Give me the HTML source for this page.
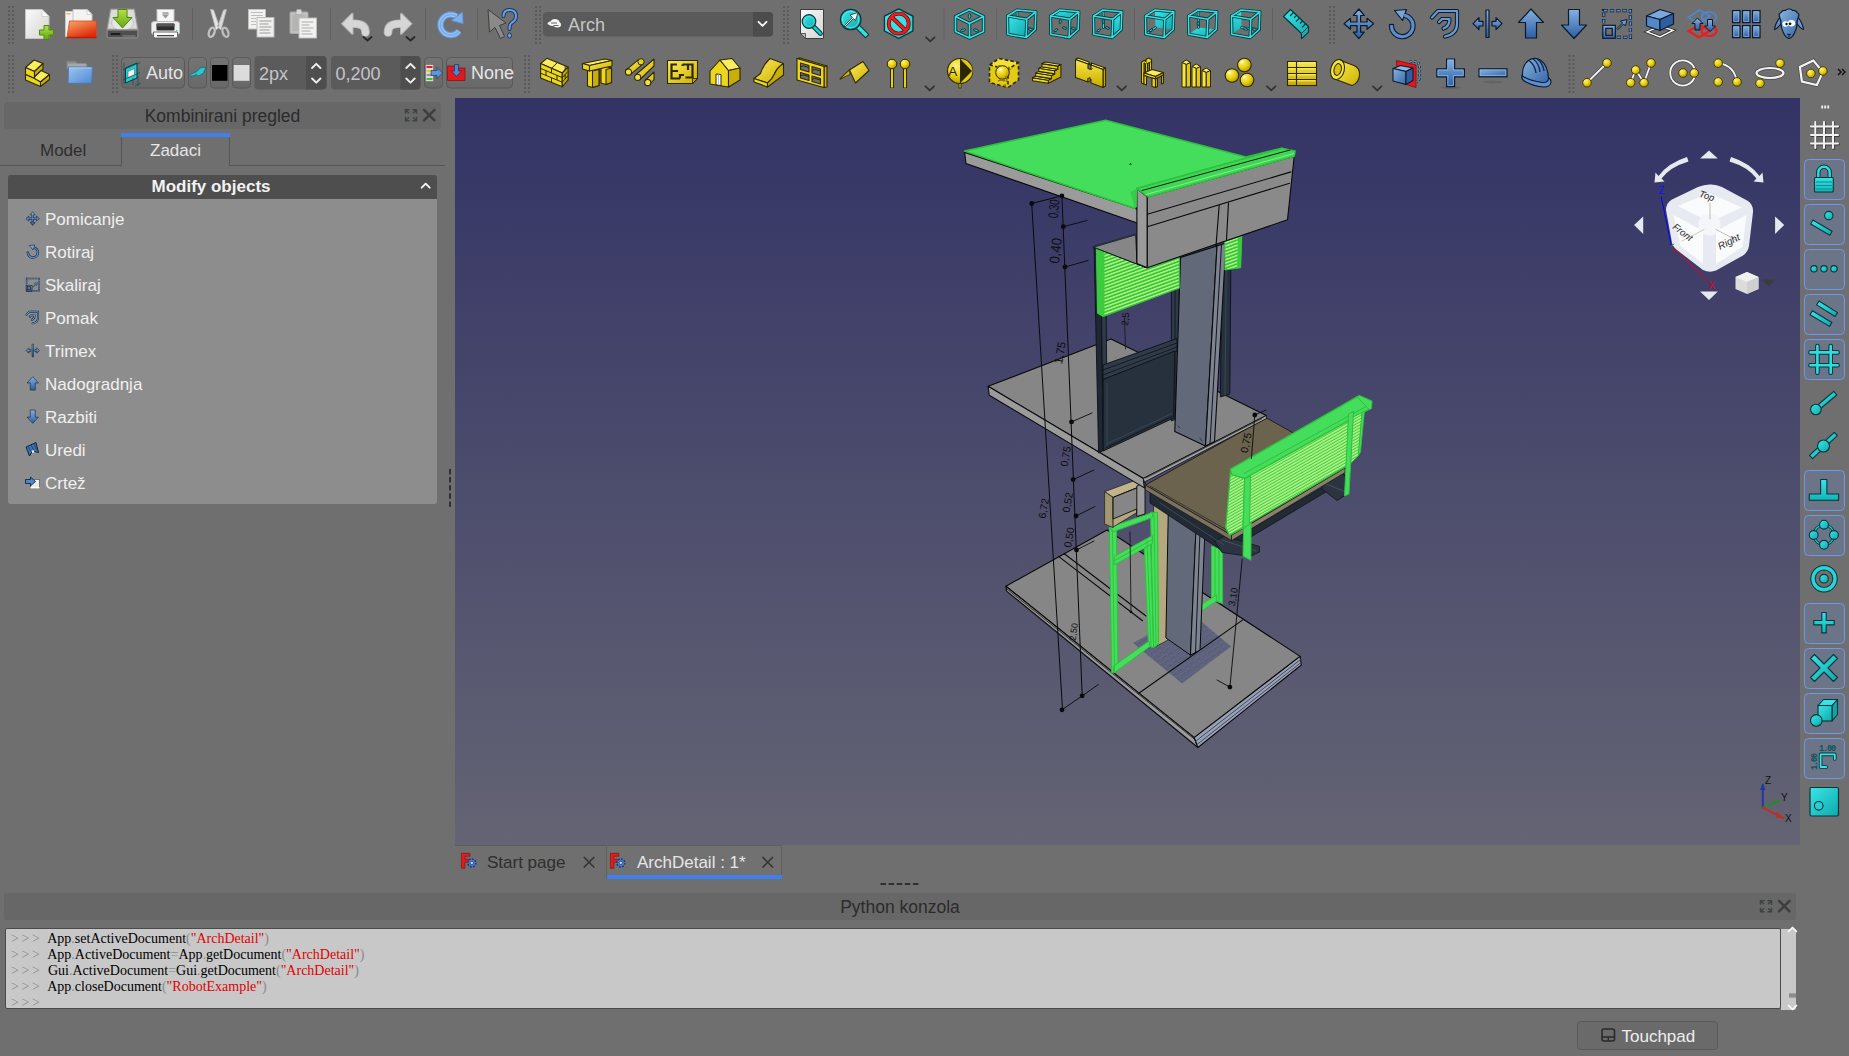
<!DOCTYPE html>
<html><head><meta charset="utf-8"><title>FreeCAD</title>
<style>
*{box-sizing:border-box;margin:0;padding:0}
html,body{width:1849px;height:1056px;overflow:hidden;background:#6f6f6f;font-family:"Liberation Sans",sans-serif;color:#e2e2e2}
.a{position:absolute}
#view{left:455px;top:98px;width:1345px;height:747px;background:linear-gradient(#333366,#646474)}
.tb{background:#676767;border-radius:3px;color:#2b2b2b;font-size:17.5px;text-align:center}
.hd{left:8px;top:175px;width:429px;height:24px;background:#4e4e4e;border-radius:3px 3px 0 0;color:#f2f2f2;font-weight:bold;font-size:17px;text-align:center;line-height:24px;padding-right:23px}
.li{left:8px;top:199px;width:429px;height:305px;background:#8d8d8d;border-radius:0 0 3px 3px}
.it{left:45px;font-size:17px;color:#f0f0f0;height:20px;line-height:20px}
#con{left:5px;top:928px;width:1776px;height:81px;background:#c8c8c8;border:1px solid #4a4a4a;border-radius:2px;font-family:"Liberation Serif",serif;font-size:14px;color:#000;line-height:16px;padding:2px 0 0 5px;white-space:pre}
#con i{font-style:normal;color:#8a8a8a}
#con u{text-decoration:none;color:#8a8a8a;letter-spacing:2.6px;margin-right:2px}
#con b{font-weight:normal;color:#e00000}
svg{position:absolute;left:0;top:0;overflow:visible}
</style></head>
<body>
<!-- 3D view -->
<div id="view" class="a"></div>
<svg width="1849" height="1056" viewBox="0 0 1849 1056"><defs>
<pattern id="lv" width="6" height="3.2" patternUnits="userSpaceOnUse" patternTransform="rotate(-20)"><rect width="6" height="3.2" fill="#34c838"/><rect y="0" width="6" height="1.45" fill="#b8f288"/></pattern>
<pattern id="lv2" width="6" height="2.6" patternUnits="userSpaceOnUse" patternTransform="rotate(-29.5)"><rect width="6" height="2.6" fill="#3ccf40"/><rect y="0" width="6" height="1.4" fill="#c4f792"/></pattern>
<pattern id="tile" width="7" height="5" patternUnits="userSpaceOnUse" patternTransform="rotate(-32)"><rect width="7" height="5" fill="#5a5e78"/><path d="M0,0 h7 M0,2.5 h7 M2,0 v2.5 M5.5,2.5 v2.5" stroke="#6a6f8a" stroke-width="0.6"/></pattern>
<radialGradient id="nc" cx="0.45" cy="0.4" r="0.7"><stop offset="0" stop-color="#ffffff"/><stop offset="1" stop-color="#e4e8ee"/></radialGradient>
<filter id="blur1"><feGaussianBlur stdDeviation="0.7"/></filter>
</defs><path d="M1031.7,203.5 L1061.9,195.8 L1087,189.5" fill="none" stroke="#0a0a0a" stroke-width="1" stroke-linecap="round" stroke-linejoin="round" /><path d="M1005.9,586.2 L1107,530 L1300.1,656.4 L1194.2,737.6 Z" fill="#868686" stroke="#0a0a0a" stroke-width="1.1" stroke-linejoin="round" /><path d="M1005.9,586.2 L1194.2,737.6 L1197.9,747.5 L1006.6,591.1 Z" fill="#9b9b9b" stroke="#0a0a0a" stroke-width="1.1" stroke-linejoin="round" /><path d="M1194.2,737.6 L1300.1,656.4 L1301.3,665 L1197.9,747.5 Z" fill="#99a1b8" stroke="#0a0a0a" stroke-width="1.1" stroke-linejoin="round" /><path d="M1196,741 L1300.6,659.5" fill="none" stroke="#3a3f4e" stroke-width="0.9" stroke-linecap="round" stroke-linejoin="round" /><path d="M1197,744.5 L1301,662.5" fill="none" stroke="#3a3f4e" stroke-width="0.9" stroke-linecap="round" stroke-linejoin="round" /><path d="M1058.8,556.6 L1142.5,620.7" fill="none" stroke="#0a0a0a" stroke-width="1.1" stroke-linecap="round" stroke-linejoin="round" /><path d="M1064,553.5 L1146,616" fill="none" stroke="#0a0a0a" stroke-width="1.1" stroke-linecap="round" stroke-linejoin="round" /><path d="M1006.3,588.5 L1195.5,740" fill="none" stroke="#0a0a0a" stroke-width="0.7" stroke-linecap="round" stroke-linejoin="round" /><path d="M1133,643 L1190,612 L1231,646.5 L1182,683.4 Z" fill="url(#tile)" stroke="none" stroke-width="0" stroke-linejoin="round" /><path d="M1138.8,693.3 L1243.5,619.4" fill="none" stroke="#0a0a0a" stroke-width="1.1" stroke-linecap="round" stroke-linejoin="round" /><path d="M1211.5,546 L1222.6,549 L1222.6,603.4 L1211.5,600 Z" fill="#44de5c" stroke="#2fc03c" stroke-width="1" stroke-linejoin="round" /><path d="M1215,547 L1215,601.5" fill="none" stroke="#2fc03c" stroke-width="1" stroke-linecap="round" stroke-linejoin="round" /><path d="M1219,548 L1219,602.5" fill="none" stroke="#2fc03c" stroke-width="1" stroke-linecap="round" stroke-linejoin="round" /><path d="M1201.6,604.5 L1216.4,595 L1216.4,601 L1201.6,611 Z" fill="#44de5c" stroke="#2fc03c" stroke-width="1" stroke-linejoin="round" /><path d="M1153.6,505 L1169,509 L1168,640 L1153.6,647.7 Z" fill="#b3a87e" stroke="#2a2a2a" stroke-width="0.8" stroke-linejoin="round" /><path d="M1168.4,505 L1197,505 L1190.5,655.1 L1165.9,637.9 Z" fill="#626a79" stroke="#0a0a0a" stroke-width="1" stroke-linejoin="round" /><path d="M1197,505 L1206,505 L1200,650 L1190.5,655.1 Z" fill="#7c8492" stroke="#0a0a0a" stroke-width="1" stroke-linejoin="round" /><path d="M1201,505 L1195.5,652.5" fill="none" stroke="#0a0a0a" stroke-width="0.9" stroke-linecap="round" stroke-linejoin="round" /><path d="M1109.3,527 L1116.5,529.5 L1118,669 L1111.7,673.6 Z" fill="#44de5c" stroke="#2fc03c" stroke-width="1" stroke-linejoin="round" /><path d="M1144,541 L1150.5,538.5 L1153.6,647.7 L1148.5,646 Z" fill="#44de5c" stroke="#2fc03c" stroke-width="1" stroke-linejoin="round" /><path d="M1150.5,512.3 L1157.5,512.3 L1158.5,644 L1153.6,647.7 Z" fill="#44de5c" stroke="#2fc03c" stroke-width="1" stroke-linejoin="round" /><path d="M1110.5,527 L1152.4,512.5 L1152.4,517.5 L1112.5,532 Z" fill="#44de5c" stroke="#2fc03c" stroke-width="1" stroke-linejoin="round" /><path d="M1114.2,556.5 L1152.4,535.5 L1152.4,543.5 L1114.2,565 Z" fill="#44de5c" stroke="#2fc03c" stroke-width="1" stroke-linejoin="round" /><path d="M1114.2,560.8 L1152.4,539.5" fill="none" stroke="#2fc03c" stroke-width="1" stroke-linecap="round" stroke-linejoin="round" /><path d="M1113,666.5 L1149,641 L1149.9,646.5 L1114,673 Z" fill="#44de5c" stroke="#2fc03c" stroke-width="1" stroke-linejoin="round" /><path d="M1112.5,530 L1114.5,671" fill="none" stroke="#2fc03c" stroke-width="0.9" stroke-linecap="round" stroke-linejoin="round" /><path d="M1147,541 L1151,646" fill="none" stroke="#2fc03c" stroke-width="0.9" stroke-linecap="round" stroke-linejoin="round" /><path d="M1154,513 L1156,645.5" fill="none" stroke="#2fc03c" stroke-width="0.9" stroke-linecap="round" stroke-linejoin="round" /><path d="M1130,532 L1131,612" fill="none" stroke="#1a1a1a" stroke-width="0.9" stroke-linecap="round" stroke-linejoin="round" /><circle cx="1131" cy="612" r="1.3" fill="#0a0a0a"/><path d="M1104.6,491.7 L1134.9,480.4 L1143.4,485.1 L1113.1,497.4 Z" fill="#c0b58a" stroke="#2a2a2a" stroke-width="0.8" stroke-linejoin="round" /><path d="M1104.6,491.7 L1113.1,497.4 L1113.1,527.7 L1104.6,523.9 Z" fill="#a2976e" stroke="#2a2a2a" stroke-width="0.8" stroke-linejoin="round" /><path d="M1113.1,497.4 L1136.8,487.9 L1136.8,512.6 L1113.1,527 Z" fill="#b3a87e" stroke="#2a2a2a" stroke-width="0.8" stroke-linejoin="round" /><path d="M1113.1,497.4 L1143,485.5 L1143,512 L1136.8,514.5 L1136.8,509 L1113.1,519 Z" fill="#868686" stroke="#0a0a0a" stroke-width="0.9" stroke-linejoin="round" /><path d="M1136.8,486 L1145,482 L1145,514 L1136.8,516.5 Z" fill="#9b9b9b" stroke="#0a0a0a" stroke-width="0.9" stroke-linejoin="round" /><path d="M1150,492 L1160,497 L1232,540 L1232,548 L1224,552 L1150,503 Z" fill="#222a35" stroke="#10151c" stroke-width="0.8" stroke-linejoin="round" /><path d="M1233,539.5 L1344.3,474.5 L1345,480.5 L1250,537.5 L1240,544 Z" fill="#222a35" stroke="#10151c" stroke-width="0.8" stroke-linejoin="round" /><path d="M1214.5,541 L1224,536 L1259.5,546.5 L1259.5,552 L1250,556.5 L1222,552.5 Z" fill="#2b3440" stroke="#10151c" stroke-width="0.8" stroke-linejoin="round" /><path d="M1222,540 L1256,551" fill="none" stroke="#47525f" stroke-width="0.9" stroke-linecap="round" stroke-linejoin="round" /><path d="M1322,479 L1340,471 L1348,479 L1347.5,494 L1337,500.5 L1322,489 Z" fill="#2b3440" stroke="#10151c" stroke-width="0.8" stroke-linejoin="round" /><path d="M1326,484 L1344,491" fill="none" stroke="#47525f" stroke-width="0.9" stroke-linecap="round" stroke-linejoin="round" /><path d="M1160,503 L1224,545" fill="none" stroke="#46505e" stroke-width="0.8" stroke-linecap="round" stroke-linejoin="round" /><path d="M1145.3,485.1 L1266.5,417.9 L1345,462 L1345,468 L1231.5,535.3 Z" fill="#6b634e" stroke="#1a1a1a" stroke-width="0.9" stroke-linejoin="round" /><path d="M1231.5,535.3 L1345,468 L1345,472.5 L1231.5,540.5 Z" fill="#8a8169" stroke="#1a1a1a" stroke-width="0.7" stroke-linejoin="round" /><path d="M1145.3,485.1 L1231.5,535.3 L1231.5,540.5 L1145.3,490 Z" fill="#7a725c" stroke="#1a1a1a" stroke-width="0.8" stroke-linejoin="round" /><path d="M1150,486 L1232,533" fill="none" stroke="#2a2a2a" stroke-width="0.8" stroke-linecap="round" stroke-linejoin="round" /><path d="M1244.7,478.5 L1251.4,476 L1250.9,560.3 L1243,556 Z" fill="#44de5c" stroke="#2fc03c" stroke-width="1" stroke-linejoin="round" /><path d="M1231.5,474.7 L1244.7,478.5 L1352.7,417.9 L1346,466.5 L1250.4,522.5 L1229.6,535.3 L1225.8,527.7 Z" fill="url(#lv2)" stroke="#2fc03c" stroke-width="1.2" stroke-linejoin="round" /><path d="M1230.5,470.9 L1244.7,478.5 L1243,528 L1229.6,535.3 L1225.8,527.7 Z" fill="url(#lv2)" stroke="#2fc03c" stroke-width="1.2" stroke-linejoin="round" /><path d="M1244.7,478.5 L1250.5,476 L1249.5,524.5 L1243,528 Z" fill="#44de5c" stroke="#2fc03c" stroke-width="1" stroke-linejoin="round" /><path d="M1230.5,469 L1357.4,396.7 L1371.6,402.7 L1370.7,408.4 L1244.7,478.5 L1231.5,474.7 Z" fill="#44de5c" stroke="#2fc03c" stroke-width="1.4" stroke-linejoin="round" /><path d="M1244,473.5 L1370.5,404" fill="none" stroke="#2fc03c" stroke-width="1" stroke-linecap="round" stroke-linejoin="round" /><path d="M1357,396.5 L1359.5,395.5 L1372,401 L1371.5,408.5 L1369,409.5 Z" fill="#44de5c" stroke="#2fc03c" stroke-width="1" stroke-linejoin="round" /><path d="M1351.7,417.9 L1362.1,412.5 L1358.4,455.7 L1350.8,463.3 Z" fill="url(#lv2)" stroke="#2fc03c" stroke-width="1" stroke-linejoin="round" /><path d="M1348.5,414 L1353.5,411.5 L1349,494 L1344.5,496 Z" fill="#44de5c" stroke="#2fc03c" stroke-width="1" stroke-linejoin="round" /><path d="M1362.1,412 L1364.5,411 L1360.5,452 L1358.4,455.7 Z" fill="#44de5c" stroke="#2fc03c" stroke-width="0.8" stroke-linejoin="round" /><path d="M988.1,386.3 L1111,339 L1223.5,394.2 L1266.3,415.5 L1143.3,478.5 Z" fill="#868686" stroke="#0a0a0a" stroke-width="1.1" stroke-linejoin="round" /><path d="M988.1,386.3 L1143.3,478.5 L1144.4,487.9 L989.2,395.2 Z" fill="#9b9b9b" stroke="#0a0a0a" stroke-width="1.1" stroke-linejoin="round" /><path d="M1143.3,478.5 L1266.3,415.5 L1266.5,418.5 L1144.4,482 Z" fill="#a4a4a4" stroke="#0a0a0a" stroke-width="0.8" stroke-linejoin="round" /><path d="M1146,478 L1262,418.5" fill="none" stroke="#2a2a2a" stroke-width="0.8" stroke-linecap="round" stroke-linejoin="round" /><path d="M1222,250 L1231,247 L1229.8,394 L1220.4,397 Z" fill="#27313d" stroke="#0d1117" stroke-width="0.9" stroke-linejoin="round" /><path d="M1226.5,249 L1225,395" fill="none" stroke="#3c4858" stroke-width="0.9" stroke-linecap="round" stroke-linejoin="round" /><path d="M1094.1,246.8 L1100.5,249.5 L1103.5,450.5 L1098.6,453 Z" fill="#1f2732" stroke="#0d1117" stroke-width="0.9" stroke-linejoin="round" /><path d="M1100.5,249.5 L1105.5,247.5 L1107.5,448 L1103.5,450.5 Z" fill="#303b49" stroke="#0d1117" stroke-width="0.9" stroke-linejoin="round" /><path d="M1171.4,288 L1179.3,285 L1179.3,417.7 L1171.4,421 Z" fill="#303b49" stroke="#0d1117" stroke-width="0.9" stroke-linejoin="round" /><path d="M1175,287 L1175,419" fill="none" stroke="#0d1117" stroke-width="0.8" stroke-linecap="round" stroke-linejoin="round" /><path d="M1103,365 L1177,338.5 L1177,351 L1103,379.5 Z" fill="#303b49" stroke="#0d1117" stroke-width="0.9" stroke-linejoin="round" /><path d="M1103,370 L1177,343" fill="none" stroke="#0d1117" stroke-width="0.8" stroke-linecap="round" stroke-linejoin="round" /><path d="M1103,375 L1177,347" fill="none" stroke="#0d1117" stroke-width="0.8" stroke-linecap="round" stroke-linejoin="round" /><path d="M1103.2,379.5 L1174.8,351 L1173.6,418 L1103.2,451 Z" fill="#27313d" stroke="#0d1117" stroke-width="0.9" stroke-linejoin="round" /><path d="M1106.5,444 L1172,413.5" fill="none" stroke="#3a4656" stroke-width="1" stroke-linecap="round" stroke-linejoin="round" /><path d="M1106.5,447.5 L1172,416.5" fill="none" stroke="#0d1117" stroke-width="0.8" stroke-linecap="round" stroke-linejoin="round" /><path d="M1107,383 L1107,446" fill="none" stroke="#3a4656" stroke-width="0.8" stroke-linecap="round" stroke-linejoin="round" /><path d="M1180.5,257.5 L1217,246 L1205.5,446.1 L1174.8,431.4 Z" fill="#626a79" stroke="#0a0a0a" stroke-width="1.1" stroke-linejoin="round" /><path d="M1217,246 L1226,243 L1214.5,441.6 L1205.5,446.1 Z" fill="#7c8492" stroke="#0a0a0a" stroke-width="1.1" stroke-linejoin="round" /><path d="M1221.5,244.5 L1210,444" fill="none" stroke="#0a0a0a" stroke-width="0.9" stroke-linecap="round" stroke-linejoin="round" /><path d="M1178,426 L1180,428" fill="none" stroke="#2a2a2a" stroke-width="0.8" stroke-linecap="round" stroke-linejoin="round" /><path d="M1200,438 L1202,441" fill="none" stroke="#2a2a2a" stroke-width="0.8" stroke-linecap="round" stroke-linejoin="round" /><path d="M1096.4,248.4 L1146.4,267.7 L1179.3,257.5 L1179.3,288.2 L1103.2,316.6 L1097.5,313.2 Z" fill="url(#lv)" stroke="#2fc03c" stroke-width="1" stroke-linejoin="round" /><path d="M1096.4,248.4 L1104.5,251.5 L1104.5,316 L1103.2,316.6 L1097.5,313.2 Z" fill="#3ccb3e" stroke="none" stroke-width="0" stroke-linejoin="round" /><path d="M1224.8,241.6 L1241.8,235.9 L1240.7,267.7 L1224.8,270 Z" fill="url(#lv)" stroke="#2fc03c" stroke-width="1" stroke-linejoin="round" /><path d="M1238,237 L1241.8,235.9 L1240.7,267.7 L1237,268.3 Z" fill="#3ccb3e" stroke="none" stroke-width="0" stroke-linejoin="round" /><path d="M1093.1,246.9 L1135.8,234.4 L1136.9,263.5 L1146.4,267.7 L1096.4,248.4 Z" fill="#868686" stroke="#0a0a0a" stroke-width="1" stroke-linejoin="round" /><path d="M1093.1,246.9 L1135.8,234.4" fill="none" stroke="#27313d" stroke-width="2" stroke-linecap="round" stroke-linejoin="round" /><path d="M964.6,152.5 L1134.8,208.3 L1147.3,214.5 L1147.3,226.5 L966,163.5 Z" fill="#9b9b9b" stroke="#0a0a0a" stroke-width="1.1" stroke-linejoin="round" /><path d="M1136.9,188.5 L1147.3,196.9 L1147.3,267.7 L1136.9,263.5 Z" fill="#9b9b9b" stroke="#0a0a0a" stroke-width="1.1" stroke-linejoin="round" /><path d="M1147.3,196.9 L1294.2,156.3 L1287.5,219.8 L1147.3,267.7 Z" fill="#8a8a8a" stroke="#0a0a0a" stroke-width="1.1" stroke-linejoin="round" /><path d="M1147.3,214.2 L1291,171.9" fill="none" stroke="#0a0a0a" stroke-width="1.1" stroke-linecap="round" stroke-linejoin="round" /><path d="M1147.3,226.7 L1289.6,183.3" fill="none" stroke="#0a0a0a" stroke-width="1.1" stroke-linecap="round" stroke-linejoin="round" /><path d="M1219.2,205.2 L1216,245.8" fill="none" stroke="#0a0a0a" stroke-width="1.1" stroke-linecap="round" stroke-linejoin="round" /><path d="M1228.5,203.1 L1226.5,239.6" fill="none" stroke="#0a0a0a" stroke-width="1.1" stroke-linecap="round" stroke-linejoin="round" /><path d="M964.6,151 L1105.6,120.2 L1246,157 L1281.7,148.3 L1136.9,188.5 L1134.8,208.3 Z" fill="#44de5c" stroke="#2fc03c" stroke-width="1.6" stroke-linejoin="round" /><path d="M1136.9,188.5 L1281.7,148.3 L1295.2,151 L1294.2,156.3 L1148.3,196.9 Z" fill="#3fd655" stroke="#2fc03c" stroke-width="1.4" stroke-linejoin="round" /><path d="M1142,190.5 L1290,150" fill="none" stroke="#0a0a0a" stroke-width="0.9" stroke-linecap="round" stroke-linejoin="round" /><path d="M1146,194.5 L1294,153.5" fill="none" stroke="#7ff08a" stroke-width="1" stroke-linecap="round" stroke-linejoin="round" /><path d="M1130.5,192 L1136.9,188.5 L1136.9,207 L1134.8,208.3 Z" fill="#39c94c" stroke="none" stroke-width="0" stroke-linejoin="round" /><path d="M1129,164.5 l1.5,-1.5 l1.5,1.5 z" fill="#0a0a0a"/><path d="M1031.7,203.5 L1062.5,709.3" fill="none" stroke="#0a0a0a" stroke-width="1" stroke-linecap="round" stroke-linejoin="round" /><path d="M1061.9,195.8 L1082.2,695.8" fill="none" stroke="#0a0a0a" stroke-width="1" stroke-linecap="round" stroke-linejoin="round" /><path d="M1063.3,226.7 L1087,220.5" fill="none" stroke="#0a0a0a" stroke-width="0.9" stroke-linecap="round" stroke-linejoin="round" /><path d="M1065,267 L1088,260.5" fill="none" stroke="#0a0a0a" stroke-width="0.9" stroke-linecap="round" stroke-linejoin="round" /><path d="M1071.5,421.9 L1092,413" fill="none" stroke="#0a0a0a" stroke-width="0.9" stroke-linecap="round" stroke-linejoin="round" /><path d="M1073.1,479.6 L1094,470" fill="none" stroke="#0a0a0a" stroke-width="0.9" stroke-linecap="round" stroke-linejoin="round" /><path d="M1076,516 L1095,506.5" fill="none" stroke="#0a0a0a" stroke-width="0.9" stroke-linecap="round" stroke-linejoin="round" /><path d="M1076.5,550 L1094,541" fill="none" stroke="#0a0a0a" stroke-width="0.9" stroke-linecap="round" stroke-linejoin="round" /><path d="M1062,709.8 L1082.2,695.8 L1098.2,684.7" fill="none" stroke="#0a0a0a" stroke-width="0.9" stroke-linecap="round" stroke-linejoin="round" /><path d="M1254.8,415 L1251.4,458.5" fill="none" stroke="#0a0a0a" stroke-width="0.9" stroke-linecap="round" stroke-linejoin="round" /><path d="M1242.2,559.1 L1229.9,687.1" fill="none" stroke="#0a0a0a" stroke-width="0.9" stroke-linecap="round" stroke-linejoin="round" /><path d="M1217,680 L1229.9,687.1" fill="none" stroke="#0a0a0a" stroke-width="0.9" stroke-linecap="round" stroke-linejoin="round" /><path d="M1254.8,415 L1266,410" fill="none" stroke="#0a0a0a" stroke-width="0.9" stroke-linecap="round" stroke-linejoin="round" /><path d="M1124.5,318 L1125.5,349" fill="none" stroke="#1a1a1a" stroke-width="0.9" stroke-linecap="round" stroke-linejoin="round" /><circle cx="1031.7" cy="203.5" r="2.4" fill="#0a0a0a"/><circle cx="1061.9" cy="195.8" r="2.4" fill="#0a0a0a"/><circle cx="1063.3" cy="226.7" r="2.4" fill="#0a0a0a"/><circle cx="1065" cy="267" r="2.4" fill="#0a0a0a"/><circle cx="1071.5" cy="421.9" r="2.4" fill="#0a0a0a"/><circle cx="1073.1" cy="479.6" r="2.4" fill="#0a0a0a"/><circle cx="1076" cy="516" r="2.4" fill="#0a0a0a"/><circle cx="1076.5" cy="550" r="2.4" fill="#0a0a0a"/><circle cx="1082.2" cy="695.8" r="2.4" fill="#0a0a0a"/><circle cx="1062" cy="709.8" r="2.4" fill="#0a0a0a"/><circle cx="1229.9" cy="687.1" r="2.4" fill="#0a0a0a"/><circle cx="1254.8" cy="415" r="2.4" fill="#0a0a0a"/><text transform="translate(1057.7,218.5) rotate(-84) scale(0.68,1)" font-family="Liberation Sans" font-size="14" fill="#0e0e0e">0,30</text><text transform="translate(1059,264) rotate(-84) scale(0.95,1)" font-family="Liberation Sans" font-size="14" fill="#0e0e0e">0,40</text><text transform="translate(1062,364.5) rotate(-80) scale(1,1)" font-family="Liberation Sans" font-size="11.5" fill="#0e0e0e">1,75</text><text transform="translate(1067.5,467) rotate(-80) scale(1,1)" font-family="Liberation Sans" font-size="10.5" fill="#0e0e0e">0,75</text><text transform="translate(1069.5,513) rotate(-80) scale(1,1)" font-family="Liberation Sans" font-size="10.5" fill="#0e0e0e">0,52</text><text transform="translate(1071,548) rotate(-80) scale(1,1)" font-family="Liberation Sans" font-size="10.5" fill="#0e0e0e">0,50</text><text transform="translate(1045.5,519) rotate(-80) scale(1,1)" font-family="Liberation Sans" font-size="10.5" fill="#0e0e0e">6,72</text><text transform="translate(1075.5,641) rotate(-82) scale(1,1)" font-family="Liberation Sans" font-size="9" fill="#0e0e0e">2,50</text><text transform="translate(1234.8,606.5) rotate(-80) scale(1,1)" font-family="Liberation Sans" font-size="9.5" fill="#0e0e0e">3,10</text><text transform="translate(1247.5,453.5) rotate(-78) scale(1,1)" font-family="Liberation Sans" font-size="10.5" fill="#0e0e0e">0,75</text><text transform="translate(1128,326) rotate(-85) scale(1,1)" font-family="Liberation Sans" font-size="9.5" fill="#0e0e0e">2,5</text><path d="M1700.1,158.5 L1709,150.4 L1717.8,158.5 Z M1700.1,291.4 L1717.8,291.4 L1709,299.9 Z M1634.1,224.9 L1643.2,216.4 V233.9 Z M1784.2,224.9 L1775.1,216.4 V233.9 Z" fill="#e6eaf0"/><path d="M1687,157 Q1668,163 1658.5,176 L1655.5,172.5 L1654.5,182.5 L1664.5,181.5 L1661.5,178.5 Q1670,167 1688.5,161.5 Z" fill="#e6eaf0"/><path d="M1731,157 Q1750,163 1759.5,176 L1762.5,172.5 L1763.5,182.5 L1753.5,181.5 L1756.5,178.5 Q1748,167 1729.5,161.5 Z" fill="#e6eaf0"/><path d="M1709.5,184.5 Q1716,184 1722,187 L1748,201 Q1753.5,205 1753,212 L1749,246 Q1748,252 1743,255.5 L1716,270.5 Q1709.5,273 1703,270 L1677,250 Q1672,246 1671.5,240 L1666,210 Q1666,203 1672,199.5 L1698,187 Q1704,184.5 1709.5,184.5 Z" fill="#e7ebf1" filter="url(#blur1)"/><path d="M1709,193 L1742,207.5 L1709.5,222 L1678,206 Z" fill="#fafbfc"/><path d="M1673.5,215 L1703,231 L1703,264 L1680.5,246 Z" fill="#fafbfc"/><path d="M1716,231 L1746.5,215 L1742.5,247 L1716,264 Z" fill="#fafbfc"/><circle cx="1709.5" cy="224.5" r="11" fill="#f4f6f9"/><path d="M1710,203 L1710,219" fill="none" stroke="#b8b8b0" stroke-width="0.9" stroke-linecap="round" stroke-linejoin="round" /><path d="M1682,241 L1704,229.5" fill="none" stroke="#c8c8b0" stroke-width="0.9" stroke-linecap="round" stroke-linejoin="round" /><path d="M1716,229.5 L1738,241" fill="none" stroke="#b8b8b0" stroke-width="0.9" stroke-linecap="round" stroke-linejoin="round" /><text font-style="italic" transform="translate(1698.5,196.5) rotate(18) scale(1,1)" font-family="Liberation Sans" font-size="9.5" fill="#2a2a2a">Top</text><text font-style="italic" transform="translate(1672,228) rotate(38) scale(1,1)" font-family="Liberation Sans" font-size="9.5" fill="#2a2a2a">Front</text><text font-style="italic" transform="translate(1720,250) rotate(-27) scale(1,1)" font-family="Liberation Sans" font-size="10" fill="#2a2a2a">Right</text><path d="M1661.3,197.2 L1671.4,246.2" fill="none" stroke="#0000ff" stroke-width="1" stroke-linecap="round" stroke-linejoin="round" /><path d="M1671.4,246.2 L1707.6,281.4" fill="none" stroke="#e00020" stroke-width="1" stroke-linecap="round" stroke-linejoin="round" /><path d="M1671.4,246.2 L1674,244" fill="none" stroke="#00c000" stroke-width="1" stroke-linecap="round" stroke-linejoin="round" /><text x="1658.5" y="193.5" font-family="Liberation Sans" font-size="10" fill="#1010ff">Z</text><text x="1708.5" y="288.5" font-family="Liberation Sans" font-size="10" fill="#e00020">X</text><path d="M1735.5,277 L1747,272 L1758.5,277 V289 L1747,294 L1735.5,289 Z" fill="#dcdcdc"/><path d="M1735.5,277 L1747,272 L1758.5,277 L1747,282 Z" fill="#f0f0f0"/><path d="M1747,282 L1758.5,277 V289 L1747,294 Z" fill="#cfcfcf"/><path d="M1762,279.5 H1775.5 L1768.8,286.5 Z" fill="#3c3c3c"/><path d="M1762.8,807.5 L1762.8,785.3" fill="none" stroke="#2038a0" stroke-width="2" stroke-linecap="round" stroke-linejoin="round" /><path d="M1760,790 L1762.8,783 L1765.6,790 Z" fill="#2038a0"/><path d="M1762.8,807.5 L1778.4,800.9" fill="none" stroke="#209020" stroke-width="1.6" stroke-linecap="round" stroke-linejoin="round" /><path d="M1774,799.5 L1780,800.2 L1775.5,804 Z" fill="#209020"/><path d="M1762.8,807.5 L1783.2,817.9" fill="none" stroke="#c03020" stroke-width="2" stroke-linecap="round" stroke-linejoin="round" /><path d="M1777,812 L1785,818.8 L1775.5,817.5 Z" fill="#c03020"/><text x="1765" y="784" font-family="Liberation Sans" font-size="10" fill="#111">Z</text><text x="1781" y="801" font-family="Liberation Sans" font-size="10" fill="#111">Y</text><text x="1785" y="821.5" font-family="Liberation Sans" font-size="10" fill="#111">X</text></svg>
<!-- left panel -->
<div class="a tb" style="left:4px;top:102px;width:437px;height:27px;line-height:28px">Kombinirani pregled</div>
<div class="a" style="left:0;top:165px;width:445px;height:1px;background:#555"></div>
<div class="a" style="left:121px;top:133px;width:109px;height:33px;background:#6f6f6f;border-left:1px solid #555;border-right:1px solid #555"></div>
<div class="a" style="left:121px;top:133px;width:109px;height:4px;background:#3f80ee"></div>
<div class="a" style="left:40px;top:141px;font-size:17px;color:#2e2e2e">Model</div>
<div class="a" style="left:150px;top:141px;font-size:17px;color:#e6e6e6">Zadaci</div>
<div class="a hd">Modify objects</div>
<div class="a li"></div>
<div class="a it" style="top:210px">Pomicanje</div>
<div class="a it" style="top:243px">Rotiraj</div>
<div class="a it" style="top:276px">Skaliraj</div>
<div class="a it" style="top:309px">Pomak</div>
<div class="a it" style="top:342px">Trimex</div>
<div class="a it" style="top:375px">Nadogradnja</div>
<div class="a it" style="top:408px">Razbiti</div>
<div class="a it" style="top:441px">Uredi</div>
<div class="a it" style="top:474px">Crtež</div>
<!-- bottom tabs -->
<div class="a" style="left:455px;top:845px;width:151px;height:1px;background:#5c5c5c"></div>
<div class="a" style="left:487px;top:853px;font-size:17px;color:#2e2e2e">Start page</div>
<div class="a" style="left:606px;top:845px;width:176px;height:34px;background:#717171;border:1px solid #606060;border-bottom:none;border-radius:2px 2px 0 0"></div>
<div class="a" style="left:606.5px;top:874.5px;width:175px;height:4px;background:#3f80ee"></div>
<div class="a" style="left:637px;top:853px;font-size:17px;color:#e6e6e6">ArchDetail : 1*</div>
<!-- python console -->
<div class="a tb" style="left:4px;top:893px;width:1792px;height:27px;line-height:28px">Python konzola</div>
<div id="con" class="a"><u>&gt;&gt;&gt;</u> App<i>.</i>setActiveDocument<i>(</i><b>"ArchDetail"</b><i>)</i>
<u>&gt;&gt;&gt;</u> App<i>.</i>ActiveDocument<i>=</i>App<i>.</i>getDocument<i>(</i><b>"ArchDetail"</b><i>)</i>
<u>&gt;&gt;&gt;</u> Gui<i>.</i>ActiveDocument<i>=</i>Gui<i>.</i>getDocument<i>(</i><b>"ArchDetail"</b><i>)</i>
<u>&gt;&gt;&gt;</u> App<i>.</i>closeDocument<i>(</i><b>"RobotExample"</b><i>)</i>
<u>&gt;&gt;&gt;</u></div>
<div class="a" style="left:1781px;top:928.5px;width:15px;height:81px;background:#c8c8c8;border-radius:0 2px 2px 0"></div>
<div class="a" style="left:1577px;top:1021px;width:141px;height:29px;border:1px solid #5a5a5a;border-radius:4px;background:#6a6a6a;font-size:17px;color:#eee;line-height:29px;padding-left:43.5px">Touchpad</div>
<!-- toolbars / icons -->
<svg width="1849" height="1056" viewBox="0 0 1849 1056">
<defs>
<linearGradient id="gB" x1="0" y1="0" x2="0" y2="1"><stop offset="0" stop-color="#86b0de"/><stop offset="1" stop-color="#2c5ea3"/></linearGradient>
<linearGradient id="gB2" x1="0" y1="0" x2="1" y2="1"><stop offset="0" stop-color="#8ab4e0"/><stop offset="1" stop-color="#3566a8"/></linearGradient>
<linearGradient id="gY" x1="0" y1="0" x2="1" y2="1"><stop offset="0" stop-color="#fbec5a"/><stop offset="1" stop-color="#cdb000"/></linearGradient>
<linearGradient id="gYv" x1="0" y1="0" x2="0" y2="1"><stop offset="0" stop-color="#f8e848"/><stop offset="1" stop-color="#c9ab00"/></linearGradient>
<radialGradient id="gYs" cx="0.35" cy="0.3" r="0.8"><stop offset="0" stop-color="#fff27a"/><stop offset="0.5" stop-color="#e8d010"/><stop offset="1" stop-color="#a88c00"/></radialGradient>
<linearGradient id="gC" x1="0" y1="0" x2="1" y2="1"><stop offset="0" stop-color="#3ae6e8"/><stop offset="1" stop-color="#0fa8ab"/></linearGradient>
<linearGradient id="gCv" x1="0" y1="0" x2="0" y2="1"><stop offset="0" stop-color="#38e4e6"/><stop offset="1" stop-color="#12b4b7"/></linearGradient>
<linearGradient id="gP" x1="0" y1="0" x2="1" y2="1"><stop offset="0" stop-color="#fafafa"/><stop offset="1" stop-color="#d4d4d2"/></linearGradient>
<linearGradient id="gO" x1="0" y1="0" x2="0.6" y2="1"><stop offset="0" stop-color="#f9a868"/><stop offset="1" stop-color="#de2a0a"/></linearGradient>
<linearGradient id="gG" x1="0" y1="0" x2="0" y2="1"><stop offset="0" stop-color="#b5e04a"/><stop offset="1" stop-color="#5fa80e"/></linearGradient>
<linearGradient id="gGr" x1="0" y1="0" x2="0" y2="1"><stop offset="0" stop-color="#e8e8e8"/><stop offset="1" stop-color="#a8a8a8"/></linearGradient>
<linearGradient id="gRb" x1="0" y1="0" x2="1" y2="1"><stop offset="0" stop-color="#9cc4f0"/><stop offset="1" stop-color="#4f8ad4"/></linearGradient>
<linearGradient id="gBtn" x1="0" y1="0" x2="0" y2="1"><stop offset="0" stop-color="#747474"/><stop offset="1" stop-color="#686868"/></linearGradient>
</defs>
<g id="row1"><rect x="8" y="6" width="2" height="2" fill="#5a5a5a"/><rect x="12" y="6" width="2" height="2" fill="#5a5a5a"/><rect x="8" y="10" width="2" height="2" fill="#5a5a5a"/><rect x="12" y="10" width="2" height="2" fill="#5a5a5a"/><rect x="8" y="14" width="2" height="2" fill="#5a5a5a"/><rect x="12" y="14" width="2" height="2" fill="#5a5a5a"/><rect x="8" y="18" width="2" height="2" fill="#5a5a5a"/><rect x="12" y="18" width="2" height="2" fill="#5a5a5a"/><rect x="8" y="22" width="2" height="2" fill="#5a5a5a"/><rect x="12" y="22" width="2" height="2" fill="#5a5a5a"/><rect x="8" y="26" width="2" height="2" fill="#5a5a5a"/><rect x="12" y="26" width="2" height="2" fill="#5a5a5a"/><rect x="8" y="30" width="2" height="2" fill="#5a5a5a"/><rect x="12" y="30" width="2" height="2" fill="#5a5a5a"/><rect x="8" y="34" width="2" height="2" fill="#5a5a5a"/><rect x="12" y="34" width="2" height="2" fill="#5a5a5a"/><rect x="8" y="38" width="2" height="2" fill="#5a5a5a"/><rect x="12" y="38" width="2" height="2" fill="#5a5a5a"/><rect x="8" y="42" width="2" height="2" fill="#5a5a5a"/><rect x="12" y="42" width="2" height="2" fill="#5a5a5a"/><g transform="translate(22,8)">
<path d="M3.5,1.5 h16.5 l7,7 v22 h-23.5 z" fill="url(#gP)" stroke="#c4c4c4" stroke-width="1"/>
<path d="M20,1.5 v7 h7 z" fill="#ffffff" stroke="#c8c8c8" stroke-width="0.8"/>
<path d="M22,17.5 h5 v4.5 h4.5 v5 h-4.5 v4.5 h-5 v-4.5 h-4.5 v-5 h4.5 z" fill="url(#gG)" stroke="#4e8a0a" stroke-width="1"/>
</g>
<g transform="translate(64.5,8)">
<rect x="1" y="3.5" width="22" height="25" fill="#f2f2f0" stroke="#c9c9c9"/>
<rect x="2" y="5" width="4" height="1.5" fill="#f0b060"/>
<path d="M8.5,1.5 h14 l5,5 v20 h-19 z" fill="#f4f4f2" stroke="#c4c4c4"/>
<path d="M22.5,1.5 v5 h5 z" fill="#fff" stroke="#c8c8c8" stroke-width="0.8"/>
<path d="M5,13 h27 v16.5 h-29.5 z" fill="url(#gO)" stroke="#d8481c" stroke-width="0.8"/>
<path d="M2.5,29.5 h29.5" stroke="#c41a08" stroke-width="1.5"/>
</g>
<g transform="translate(106.5,8)">
<path d="M4,1 h24 l3.5,20 v7 q0,2 -2,2 h-27 q-2,0 -2,-2 v-7 z" fill="#c4c4c4" stroke="#8c8c8c"/>
<path d="M5,2 h22 l3,18 h-28 z" fill="#dcdcdc"/>
<ellipse cx="16" cy="15" rx="11" ry="7.5" fill="#e6e6e6" stroke="#c0c0c0"/>
<path d="M1,21.5 h30 v6.5 q0,1.5 -1.5,1.5 h-27 q-1.5,0 -1.5,-1.5 z" fill="#4e4e4e"/><path d="M1.5,22 h29" stroke="#9a9a9a" stroke-width="1"/>
<rect x="4" y="25" width="10" height="2" rx="1" fill="#1c1c1c"/><path d="M16,28 h13" stroke="#8a8a8a" stroke-width="1"/>
<path d="M11.5,1.5 h9 v8 h5 l-9.5,10.5 l-9.5,-10.5 h5 z" fill="url(#gG)" stroke="#4e8a0a" stroke-width="1"/>
</g>
<g transform="translate(150,8)">
<rect x="7" y="1.5" width="17" height="13" fill="#f6f6f6" stroke="#c2c2c2"/>
<path d="M12,6.5 h7 l-3.5,4 z" fill="#9a9a9a"/>
<rect x="12.5" y="4" width="6" height="2.5" fill="#b0b0b0"/>
<rect x="1.5" y="13.5" width="28" height="13" rx="2.5" fill="#ededed" stroke="#bdbdbd"/>
<rect x="6.5" y="15.5" width="18" height="7" rx="1" fill="#2c2c2c"/>
<rect x="6.5" y="15.5" width="18" height="3" rx="1" fill="#555"/>
<path d="M3.5,24 h24 v4.5 q0,1.5 -1.5,1.5 h-21 q-1.5,0 -1.5,-1.5 z" fill="#fbfbfb" stroke="#5a5a5a" stroke-width="0.9"/>
<rect x="7" y="27" width="17" height="1.3" fill="#444"/>
<rect x="26" y="22" width="1.2" height="1.2" fill="#5c5"/>
</g>
<g transform="translate(203,8)">
<path d="M7.5,1.5 l3,0.5 l6,17 l-3.5,3 z" fill="#e4e4e4" stroke="#bcbcbc" stroke-width="0.8"/>
<path d="M23.5,1.5 l-3,0.5 l-6,17 l3.5,3 z" fill="#dadada" stroke="#b4b4b4" stroke-width="0.8"/>
<ellipse cx="8.7" cy="24.3" rx="2.7" ry="4.8" transform="rotate(20 8.7 24.3)" fill="none" stroke="#c2c2c0" stroke-width="2.4"/>
<ellipse cx="22.5" cy="24.3" rx="2.7" ry="4.8" transform="rotate(-20 22.5 24.3)" fill="none" stroke="#bcbcba" stroke-width="2.4"/>
<circle cx="15.5" cy="17.5" r="1" fill="#9a9a9a"/>
</g>
<g transform="translate(246,8)">
<rect x="2.5" y="1.5" width="17" height="19.5" fill="#f2f2f0" stroke="#c0c0c0"/>
<path d="M5,4.5 h12 M5,7.5 h12 M5,10.5 h5 M5,13.5 h5 M5,16.5 h5" stroke="#bdbdbd" stroke-width="1.2"/>
<rect x="11" y="9.5" width="17" height="19.5" fill="#f0f0ee" stroke="#bcbcbc"/>
<path d="M13.5,13 h12 M13.5,16 h9 M13.5,19 h12 M13.5,22 h10 M13.5,25 h11" stroke="#b8b8b8" stroke-width="1.3"/>
</g>
<g transform="translate(288.5,8)">
<rect x="1.5" y="4" width="18" height="21.5" rx="1" fill="#c2c2c0" stroke="#a6a6a4"/>
<path d="M7,6.5 l1.5,-5 h4 l1.5,5 z" fill="#d8d8d8" stroke="#a8a8a8" stroke-width="0.8"/>
<rect x="4" y="7" width="13" height="16" fill="#b4b4b2"/>
<rect x="10.5" y="10" width="17.5" height="20" fill="#f2f2f0" stroke="#bebebe"/>
<path d="M13,14 h12 M13,17 h8 M13,20 h12 M13,23 h9 M13,26 h11" stroke="#c4c4c4" stroke-width="1.3"/>
</g>
<g transform="translate(340,8)">
<path d="M25.5,24.5 C25.5,17 21,15.5 9,15.5" fill="none" stroke="#b4b4b4" stroke-width="8.6" stroke-linecap="round"/>
<path d="M0.8,15.7 L11.5,5 Q13.5,4 13.5,6.5 V25.5 Q13.5,27.5 11.5,26.5 Z" fill="#b4b4b4"/>
<path d="M25.5,24.5 C25.5,17 21,15.5 9,15.5" fill="none" stroke="#d6d6d6" stroke-width="6.8" stroke-linecap="round"/>
<path d="M2.3,15.7 L11.8,6.3 Q12.5,5.8 12.5,7 V24.5 Q12.5,26 11.8,25.3 Z" fill="#d6d6d6"/>
</g>
<g transform="translate(383,8)"><g transform="translate(30.5,0) scale(-1,1)">
<path d="M25.5,24.5 C25.5,17 21,15.5 9,15.5" fill="none" stroke="#b4b4b4" stroke-width="8.6" stroke-linecap="round"/>
<path d="M0.8,15.7 L11.5,5 Q13.5,4 13.5,6.5 V25.5 Q13.5,27.5 11.5,26.5 Z" fill="#b4b4b4"/>
<path d="M25.5,24.5 C25.5,17 21,15.5 9,15.5" fill="none" stroke="#d6d6d6" stroke-width="6.8" stroke-linecap="round"/>
<path d="M2.3,15.7 L11.8,6.3 Q12.5,5.8 12.5,7 V24.5 Q12.5,26 11.8,25.3 Z" fill="#d6d6d6"/>
</g></g>
<g transform="translate(435,8)">
<path d="M24,23 A10.3,10.3 0 1 1 21.5,8.3" fill="none" stroke="#5f96dc" stroke-width="6.4"/>
<path d="M24,23 A10.3,10.3 0 1 1 21.5,8.3" fill="none" stroke="#9ac2f2" stroke-width="4.2"/>
<path d="M24,23 A10.3,10.3 0 1 1 21.5,8.3" fill="none" stroke="#78acec" stroke-width="1.6"/>
<path d="M16.5,12.5 L27.5,4 L28,15.5 Z" fill="#7fb0ee" stroke="#5f96dc" stroke-width="1" stroke-linejoin="round"/>
</g>
<g transform="translate(487,8)">
<path d="M1,1.5 L2.5,24 L8,19.5 L13.5,30.5 L17.5,28.5 L12.5,17.5 L19,15 Z" fill="#8a8a88" stroke="#3e3e3e" stroke-width="1" stroke-linejoin="round"/>
<path d="M16.5,8 Q16.5,2 22.5,2 Q29,2 29,8 Q29,12.5 25,14.5 Q22.5,16 22.5,21" fill="none" stroke="#1b3a66" stroke-width="4" stroke-linecap="round"/>
<path d="M16.5,8 Q16.5,2 22.5,2 Q29,2 29,8 Q29,12.5 25,14.5 Q22.5,16 22.5,21" fill="none" stroke="#6da0e0" stroke-width="2" stroke-linecap="round"/>
<ellipse cx="22.5" cy="27.5" rx="2" ry="2.6" fill="#6da0e0" stroke="#1b3a66" stroke-width="1"/>
</g>
<g transform="translate(796,8)">
<path d="M4.5,1.5 h23 v29 h-18 l-5,-5 z" fill="url(#gP)" stroke="#3c3c3c" stroke-width="1"/>
<path d="M4.5,25.5 h5 v5 z" fill="#bdbdbd" stroke="#3c3c3c" stroke-width="0.8"/>
<path d="M17.5,18.5 l7,7" stroke="#06363a" stroke-width="4.6" stroke-linecap="round"/>
<path d="M17.5,18.5 l7,7" stroke="#18c8cb" stroke-width="2.6" stroke-linecap="round"/>
<circle cx="13" cy="13.5" r="6.8" fill="url(#gC)" stroke="#06363a" stroke-width="1.2"/>
<circle cx="13" cy="13.5" r="5" fill="none" stroke="#5ceff0" stroke-width="0.8" opacity="0.7"/>
</g>
<g transform="translate(839,8)">
<path d="M19,19 l9.5,9.5" stroke="#06363a" stroke-width="5.6" stroke-linecap="butt"/>
<path d="M18.5,18.5 l9.3,9.3" stroke="#34e0e2" stroke-width="3.6" stroke-linecap="butt"/>
<circle cx="11.7" cy="11.5" r="10.2" fill="url(#gC)" stroke="#06363a" stroke-width="1.3"/>
<circle cx="11.7" cy="11.5" r="8.2" fill="none" stroke="#62f0f2" stroke-width="1" opacity="0.8"/>
<path d="M5,18 L13.5,9.5 L11,7 L19,4.5 L16.5,12.5 L14.5,10.5 L6,19 Z" fill="#f4f4f4" stroke="#3a3a3a" stroke-width="0.9" stroke-linejoin="round"/>
</g>
<g transform="translate(882.7,8)">
<path d="M16,0.8 L30.3,8.2 V23 L16,30.5 L1.7,23 V8.2 Z" fill="url(#gC)" stroke="#06363a" stroke-width="1.3" stroke-linejoin="round"/>
<path d="M16,3 L28.3,9.4 V21.9 L16,28.3 L3.7,21.9 V9.4 Z" fill="none" stroke="#5aeef0" stroke-width="0.8"/>
<circle cx="16" cy="15.6" r="10" fill="#3adfe2"/>
<circle cx="16" cy="15.6" r="10" fill="none" stroke="#5a0000" stroke-width="3.8"/>
<path d="M9,9 L23,22.5" stroke="#5a0000" stroke-width="4"/>
<circle cx="16" cy="15.6" r="10" fill="none" stroke="#ee1c1c" stroke-width="2.5"/>
<path d="M9,9 L23,22.5" stroke="#ee1c1c" stroke-width="2.7"/>
</g>
<g transform="translate(954,8)"><path d="M15.5,1.8 L29.5,8.5 V23.5 L15.5,30 L1.5,23.5 V8.5 Z M1.5,8.5 L15.5,15.5 L29.5,8.5 M15.5,15.5 V30" fill="none" stroke="#06363a" stroke-width="3.4" stroke-linejoin="round" stroke-linecap="round"/><path d="M15.5,1.8 L29.5,8.5 V23.5 L15.5,30 L1.5,23.5 V8.5 Z M1.5,8.5 L15.5,15.5 L29.5,8.5 M15.5,15.5 V30" fill="none" stroke="#34e0e2" stroke-width="1.6" stroke-linejoin="round" stroke-linecap="round"/><ellipse cx="15.5" cy="8.3" rx="1.3" ry="2.6" transform="rotate(0 15.5 8.3)" fill="#18c8cb" stroke="#06363a" stroke-width="0.9"/><ellipse cx="9" cy="22.3" rx="2.6" ry="1.2" transform="rotate(-20 9 22.3)" fill="#18c8cb" stroke="#06363a" stroke-width="0.9"/><ellipse cx="22" cy="22.3" rx="2.6" ry="1.2" transform="rotate(20 22 22.3)" fill="#18c8cb" stroke="#06363a" stroke-width="0.9"/></g>
<g transform="translate(1005.5,8)"><path d="M11.5,2 L12,19.5 M12,19.5 L29.7,21.5" fill="none" stroke="#06363a" stroke-width="2.6" stroke-linejoin="round" stroke-linecap="round"/><path d="M11.5,2 L12,19.5 M12,19.5 L29.7,21.5" fill="none" stroke="#34e0e2" stroke-width="1.1" stroke-linejoin="round" stroke-linecap="round"/><path d="M2,8 L21.3,11.2 L20.6,29.6 L2.3,26.3 Z" fill="url(#gC)"/><path d="M2,8 L21.3,11.2 L20.6,29.6 L2.3,26.3 Z M2,8 L11.5,2 L30.3,3.8 L21.3,11.2 Z M21.3,11.2 L30.3,3.8 L29.7,21.5 L20.6,29.6 Z" fill="none" stroke="#06363a" stroke-width="3.2" stroke-linejoin="round" stroke-linecap="round"/><path d="M2,8 L21.3,11.2 L20.6,29.6 L2.3,26.3 Z M2,8 L11.5,2 L30.3,3.8 L21.3,11.2 Z M21.3,11.2 L30.3,3.8 L29.7,21.5 L20.6,29.6 Z" fill="none" stroke="#34e0e2" stroke-width="1.5" stroke-linejoin="round" stroke-linecap="round"/><ellipse cx="25" cy="21.5" rx="2.3" ry="1.1" transform="rotate(20 25 21.5)" fill="#18c8cb" stroke="#06363a" stroke-width="0.9"/></g>
<g transform="translate(1048.5,8)"><path d="M2,8 L11.5,2 L30.3,3.8 L21.3,11.2 Z" fill="url(#gC)"/><path d="M2,8 L21.3,11.2 L20.6,29.6 L2.3,26.3 Z M2,8 L11.5,2 L30.3,3.8 L21.3,11.2 Z M21.3,11.2 L30.3,3.8 L29.7,21.5 L20.6,29.6 Z" fill="none" stroke="#06363a" stroke-width="3.2" stroke-linejoin="round" stroke-linecap="round"/><path d="M2,8 L21.3,11.2 L20.6,29.6 L2.3,26.3 Z M2,8 L11.5,2 L30.3,3.8 L21.3,11.2 Z M21.3,11.2 L30.3,3.8 L29.7,21.5 L20.6,29.6 Z" fill="none" stroke="#34e0e2" stroke-width="1.5" stroke-linejoin="round" stroke-linecap="round"/><ellipse cx="11.7" cy="13.5" rx="1" ry="2.3" transform="rotate(0 11.7 13.5)" fill="#18c8cb" stroke="#06363a" stroke-width="0.9"/><ellipse cx="7.3" cy="22.3" rx="2.3" ry="1" transform="rotate(-35 7.3 22.3)" fill="#18c8cb" stroke="#06363a" stroke-width="0.9"/><ellipse cx="16" cy="20" rx="2.3" ry="1.1" transform="rotate(15 16 20)" fill="#18c8cb" stroke="#06363a" stroke-width="0.9"/><ellipse cx="25" cy="20.5" rx="2.3" ry="1.1" transform="rotate(20 25 20.5)" fill="#18c8cb" stroke="#06363a" stroke-width="0.9"/></g>
<g transform="translate(1091.5,8)"><path d="M11.5,2 L12,19.5" fill="none" stroke="#06363a" stroke-width="2.6" stroke-linejoin="round" stroke-linecap="round"/><path d="M11.5,2 L12,19.5" fill="none" stroke="#34e0e2" stroke-width="1.1" stroke-linejoin="round" stroke-linecap="round"/><path d="M21.3,11.2 L30.3,3.8 L29.7,21.5 L20.6,29.6 Z" fill="url(#gCv)"/><path d="M2,8 L21.3,11.2 L20.6,29.6 L2.3,26.3 Z M2,8 L11.5,2 L30.3,3.8 L21.3,11.2 Z M21.3,11.2 L30.3,3.8 L29.7,21.5 L20.6,29.6 Z" fill="none" stroke="#06363a" stroke-width="3.2" stroke-linejoin="round" stroke-linecap="round"/><path d="M2,8 L21.3,11.2 L20.6,29.6 L2.3,26.3 Z M2,8 L11.5,2 L30.3,3.8 L21.3,11.2 Z M21.3,11.2 L30.3,3.8 L29.7,21.5 L20.6,29.6 Z" fill="none" stroke="#34e0e2" stroke-width="1.5" stroke-linejoin="round" stroke-linecap="round"/><ellipse cx="11.7" cy="13.5" rx="1" ry="2.3" transform="rotate(0 11.7 13.5)" fill="#18c8cb" stroke="#06363a" stroke-width="0.9"/><ellipse cx="7.3" cy="22.3" rx="2.3" ry="1" transform="rotate(-35 7.3 22.3)" fill="#18c8cb" stroke="#06363a" stroke-width="0.9"/><ellipse cx="16" cy="20" rx="2.3" ry="1.1" transform="rotate(15 16 20)" fill="#18c8cb" stroke="#06363a" stroke-width="0.9"/></g>
<g transform="translate(1143.5,8)"><path d="M11.5,2 L30.3,3.8 L29.7,21.5 L12,19.5 Z" fill="url(#gC)"/><path d="M12,19.5 L2.3,26.3" fill="none" stroke="#06363a" stroke-width="2.6" stroke-linejoin="round" stroke-linecap="round"/><path d="M12,19.5 L2.3,26.3" fill="none" stroke="#34e0e2" stroke-width="1.1" stroke-linejoin="round" stroke-linecap="round"/><path d="M2,8 L21.3,11.2 L20.6,29.6 L2.3,26.3 Z M2,8 L11.5,2 L30.3,3.8 L21.3,11.2 Z M21.3,11.2 L30.3,3.8 L29.7,21.5 L20.6,29.6 Z" fill="none" stroke="#06363a" stroke-width="3.2" stroke-linejoin="round" stroke-linecap="round"/><path d="M2,8 L21.3,11.2 L20.6,29.6 L2.3,26.3 Z M2,8 L11.5,2 L30.3,3.8 L21.3,11.2 Z M21.3,11.2 L30.3,3.8 L29.7,21.5 L20.6,29.6 Z" fill="none" stroke="#34e0e2" stroke-width="1.5" stroke-linejoin="round" stroke-linecap="round"/><ellipse cx="7.3" cy="22.3" rx="2.3" ry="1" transform="rotate(-35 7.3 22.3)" fill="#18c8cb" stroke="#06363a" stroke-width="0.9"/></g>
<g transform="translate(1186.5,8)"><path d="M2.3,26.3 L20.6,29.6 L29.7,21.5 L12,19.5 Z" fill="url(#gC)"/><path d="M11.5,2 L12,19.5" fill="none" stroke="#06363a" stroke-width="2.6" stroke-linejoin="round" stroke-linecap="round"/><path d="M11.5,2 L12,19.5" fill="none" stroke="#34e0e2" stroke-width="1.1" stroke-linejoin="round" stroke-linecap="round"/><path d="M2,8 L21.3,11.2 L20.6,29.6 L2.3,26.3 Z M2,8 L11.5,2 L30.3,3.8 L21.3,11.2 Z M21.3,11.2 L30.3,3.8 L29.7,21.5 L20.6,29.6 Z" fill="none" stroke="#06363a" stroke-width="3.2" stroke-linejoin="round" stroke-linecap="round"/><path d="M2,8 L21.3,11.2 L20.6,29.6 L2.3,26.3 Z M2,8 L11.5,2 L30.3,3.8 L21.3,11.2 Z M21.3,11.2 L30.3,3.8 L29.7,21.5 L20.6,29.6 Z" fill="none" stroke="#34e0e2" stroke-width="1.5" stroke-linejoin="round" stroke-linecap="round"/><ellipse cx="11.7" cy="15.5" rx="1" ry="2.3" transform="rotate(0 11.7 15.5)" fill="#18c8cb" stroke="#06363a" stroke-width="0.9"/></g>
<g transform="translate(1229.5,8)"><path d="M2,8 L11.5,2 L12,19.5 L2.3,26.3 Z" fill="url(#gCv)"/><path d="M12,19.5 L29.7,21.5" fill="none" stroke="#06363a" stroke-width="2.6" stroke-linejoin="round" stroke-linecap="round"/><path d="M12,19.5 L29.7,21.5" fill="none" stroke="#34e0e2" stroke-width="1.1" stroke-linejoin="round" stroke-linecap="round"/><path d="M2,8 L21.3,11.2 L20.6,29.6 L2.3,26.3 Z M2,8 L11.5,2 L30.3,3.8 L21.3,11.2 Z M21.3,11.2 L30.3,3.8 L29.7,21.5 L20.6,29.6 Z" fill="none" stroke="#06363a" stroke-width="3.2" stroke-linejoin="round" stroke-linecap="round"/><path d="M2,8 L21.3,11.2 L20.6,29.6 L2.3,26.3 Z M2,8 L11.5,2 L30.3,3.8 L21.3,11.2 Z M21.3,11.2 L30.3,3.8 L29.7,21.5 L20.6,29.6 Z" fill="none" stroke="#34e0e2" stroke-width="1.5" stroke-linejoin="round" stroke-linecap="round"/><ellipse cx="16" cy="21" rx="2.3" ry="1.1" transform="rotate(15 16 21)" fill="#18c8cb" stroke="#06363a" stroke-width="0.9"/><ellipse cx="25" cy="21.5" rx="2.3" ry="1.1" transform="rotate(20 25 21.5)" fill="#18c8cb" stroke="#06363a" stroke-width="0.9"/></g>
<g transform="translate(1282,8)">
<path d="M1.5,8.5 L8.5,1.5 L26.5,18.5 L26.5,24 L19.5,30.5 L19.5,25.5 Z" fill="url(#gC)" stroke="#06363a" stroke-width="1.2" stroke-linejoin="round"/>
<path d="M19.5,25.5 L26.5,18.5" stroke="#06363a" stroke-width="1"/>
<path d="M19.5,30.5 L19.5,25.5 L26.5,18.5 L26.5,24 Z" fill="#0fb0b3" stroke="#06363a" stroke-width="1"/>
<path d="M11.5,4.5 l-3.5,3.5 M14.5,7.3 l-2.5,2.5 M17.5,10.2 l-3.5,3.5 M20.5,13 l-2.5,2.5 M23.5,15.8 l-3.5,3.5" stroke="#06363a" stroke-width="1.2"/>
</g>
<g transform="translate(1343,8)"><path d="M15.8,1 l5.5,6.5 h-3.7 v6.5 h6.5 v-3.7 l6.5,5.5 l-6.5,5.5 v-3.7 h-6.5 v6.5 h3.7 l-5.5,6.5 l-5.5,-6.5 h3.7 v-6.5 h-6.5 v3.7 l-6.5,-5.5 l6.5,-5.5 v3.7 h6.5 v-6.5 h-3.7 z" fill="url(#gB)" stroke="#0b1a2c" stroke-width="1.2" stroke-linejoin="round" /></g>
<g transform="translate(1386,8)">
<path d="M5.5,17 A10.8,10.8 0 1 0 18,7.2" fill="none" stroke="#0b1a2c" stroke-width="5.2"/>
<path d="M8.5,2.5 L20.5,1.5 L16.5,12.5 Z" fill="#79a6d8" stroke="#0b1a2c" stroke-width="1.2" stroke-linejoin="round"/>
<path d="M5.5,17 A10.8,10.8 0 1 0 18,7.2" fill="none" stroke="#5b8fcc" stroke-width="3"/>
<path d="M3,16.5 h5" stroke="#0b1a2c" stroke-width="1.2"/>
</g>
<g transform="translate(1429.5,8)">
<path d="M2.5,9.5 L8.5,3 H27.5 V16 Q27.5,26 15.5,28.5" fill="none" stroke="#0b1a2c" stroke-width="4.2" stroke-linecap="round" stroke-linejoin="round"/>
<path d="M2.5,9.5 L8.5,3 H27.5 V16 Q27.5,26 15.5,28.5" fill="none" stroke="#6a9ad2" stroke-width="2.2" stroke-linecap="round" stroke-linejoin="round"/>
<path d="M9.5,14 L12.5,11 H20 Q20,18.5 14,20.5" fill="none" stroke="#0b1a2c" stroke-width="4.2" stroke-linecap="round" stroke-linejoin="round"/>
<path d="M9.5,14 L12.5,11 H20 Q20,18.5 14,20.5" fill="none" stroke="#6a9ad2" stroke-width="2.2" stroke-linecap="round" stroke-linejoin="round"/>
</g>
<g transform="translate(1471.5,8)"><path d="M14.5,2 h3 v27.5 h-3 z" fill="url(#gB)" stroke="#0b1a2c" stroke-width="1.2" stroke-linejoin="round" /><path d="M1.5,15.7 l6,-6 v3.7 h4 v4.6 h-4 v3.7 z" fill="url(#gB)" stroke="#0b1a2c" stroke-width="1.2" stroke-linejoin="round" /><path d="M30.5,15.7 l-6,-6 v3.7 h-4 v4.6 h4 v3.7 z" fill="url(#gB)" stroke="#0b1a2c" stroke-width="1.2" stroke-linejoin="round" /></g>
<g transform="translate(1515,8)"><path d="M16,1 L28.5,14.5 H21.5 V30 H10.5 V14.5 H3.5 Z" fill="url(#gB)" stroke="#0b1a2c" stroke-width="1.2" stroke-linejoin="round" /></g>
<g transform="translate(1558,8)"><path d="M16,30.5 L28.5,17 H21.5 V1.5 H10.5 V17 H3.5 Z" fill="url(#gB)" stroke="#0b1a2c" stroke-width="1.2" stroke-linejoin="round" /></g>
<g transform="translate(1601,8)">
<rect x="2.6" y="2.6" width="26.8" height="26.8" fill="none" stroke="#0b1a2c" stroke-width="3.3" stroke-dasharray="4.2,2.1"/>
<rect x="2.6" y="2.6" width="26.8" height="26.8" fill="none" stroke="#5a8fd2" stroke-width="1.8" stroke-dasharray="3.4,2.9" stroke-dashoffset="-0.4"/>
<rect x="1" y="16.5" width="14" height="14.5" fill="#6f6f6f"/>
<rect x="1.8" y="17.3" width="12.5" height="13" fill="url(#gB)" stroke="#0b1a2c" stroke-width="1.2"/>
<rect x="4.8" y="20.3" width="6.5" height="7" fill="#6f6f6f" stroke="#0b1a2c" stroke-width="1.2"/>
<path d="M16,20.5 L21.5,15 L19.5,13 L26,11.5 L24.5,18 L22.5,16 L17,21.5 Z" fill="#6a9ad2" stroke="#0b1a2c" stroke-width="1" stroke-linejoin="round"/>
</g>
<g transform="translate(1644,8)">
<path d="M3,23.9 L16,28.9 L29,22.3 L16,18 Z" fill="none" stroke="#2a2a2a" stroke-width="3"/>
<path d="M3,23.9 L16,28.9 L29,22.3 L16,18 Z" fill="none" stroke="#fafafa" stroke-width="1.5"/>
<path d="M2.5,8 L16,1.5 L29.5,5.5 L16,11.5 Z" fill="#7aa8dc" stroke="#0b1a2c" stroke-width="1.2" stroke-linejoin="round"/>
<path d="M2.5,8 L16,11.5 V22.5 L2.5,18 Z" fill="#5388c8" stroke="#0b1a2c" stroke-width="1.2" stroke-linejoin="round"/>
<path d="M16,11.5 L29.5,5.5 V16 L16,22.5 Z" fill="#2e5fa2" stroke="#0b1a2c" stroke-width="1.2" stroke-linejoin="round"/>
</g>
<g transform="translate(1687,8)">
<path d="M1.5,9.5 L12.5,2 L23,8 L12,15.5 Z" fill="none" stroke="#4f86cf" stroke-width="1.8"/>
<ellipse cx="22" cy="9" rx="7.5" ry="5" fill="none" stroke="#4f86cf" stroke-width="1.8"/>
<path d="M1.5,23 L12.5,17 L23,22.5 L12,29.5 Z" fill="none" stroke="#ee1c1c" stroke-width="2.2"/>
<ellipse cx="22" cy="23" rx="7.5" ry="5" fill="none" stroke="#ee1c1c" stroke-width="2.2"/>
<path d="M10.5,10 l5.5,5.5 h-3 v6.5 h-5 v-6.5 h-3 z" fill="url(#gB)" stroke="#0b1a2c" stroke-width="1"/>
<path d="M23,23.5 l5.5,-5.5 h-3 v-6.5 h-5 v6.5 h-3 z" fill="url(#gB)" stroke="#0b1a2c" stroke-width="1"/>
</g>
<g transform="translate(1730,8)"><rect x="2.6" y="2.6" width="7.4" height="12" fill="url(#gB)" stroke="#0b1a2c" stroke-width="1.3"/><rect x="3.8" y="3.8" width="5" height="9.6" fill="none" stroke="#8fb8e6" stroke-width="0.7"/><rect x="12.6" y="2.6" width="7.4" height="12" fill="url(#gB)" stroke="#0b1a2c" stroke-width="1.3"/><rect x="13.8" y="3.8" width="5" height="9.6" fill="none" stroke="#8fb8e6" stroke-width="0.7"/><rect x="22.6" y="2.6" width="7.4" height="12" fill="url(#gB)" stroke="#0b1a2c" stroke-width="1.3"/><rect x="23.8" y="3.8" width="5" height="9.6" fill="none" stroke="#8fb8e6" stroke-width="0.7"/><rect x="2.6" y="17.6" width="7.4" height="12" fill="url(#gB)" stroke="#0b1a2c" stroke-width="1.3"/><rect x="3.8" y="18.8" width="5" height="9.6" fill="none" stroke="#8fb8e6" stroke-width="0.7"/><rect x="12.6" y="17.6" width="7.4" height="12" fill="url(#gB)" stroke="#0b1a2c" stroke-width="1.3"/><rect x="13.8" y="18.8" width="5" height="9.6" fill="none" stroke="#8fb8e6" stroke-width="0.7"/><rect x="22.6" y="17.6" width="7.4" height="12" fill="url(#gB)" stroke="#0b1a2c" stroke-width="1.3"/><rect x="23.8" y="18.8" width="5" height="9.6" fill="none" stroke="#8fb8e6" stroke-width="0.7"/></g>
<g transform="translate(1773,8)">
<path d="M7,9 Q2,16 1.5,21.5 Q4,21 8.5,15 Z" fill="#5c8fd0" stroke="#0b1a2c" stroke-width="1.2" stroke-linejoin="round"/>
<path d="M25,9 Q30,16 30.5,21.5 Q28,21 23.5,15 Z" fill="#6a9ad6" stroke="#0b1a2c" stroke-width="1.2" stroke-linejoin="round"/>
<path d="M16,1 Q18.5,0.8 19.5,2.5 Q23,1.8 24,4.5 Q26.5,5.5 25.5,8.5 Q25,11 24,12.5 Q24.5,20 21.5,25 Q19,30 16,30.5 Q13,30 10.5,25 Q7.5,20 8,12.5 Q7,11 6.5,8.5 Q5.5,5.5 8,4.5 Q9,1.8 12.5,2.5 Q13.5,0.8 16,1 Z" fill="url(#gB2)" stroke="#0b1a2c" stroke-width="1.2" stroke-linejoin="round"/>
<ellipse cx="12.5" cy="16" rx="3" ry="2.8" fill="#fff"/>
<ellipse cx="18.5" cy="15.3" rx="3.6" ry="3.3" fill="#fff"/>
<circle cx="13.5" cy="16" r="1.2" fill="#0a1020"/>
<circle cx="17" cy="15.8" r="1.4" fill="#0a1020"/>
<path d="M14,26 Q16,27.5 18,26 M16,27 V29.5" fill="none" stroke="#0b1a2c" stroke-width="1"/>
</g>
<rect x="192" y="8" width="1" height="32" fill="#626262"/><rect x="330" y="8" width="1" height="32" fill="#626262"/><rect x="425" y="8" width="1" height="32" fill="#626262"/><rect x="477" y="8" width="1" height="32" fill="#626262"/><rect x="943.5" y="8" width="1" height="32" fill="#626262"/><rect x="996" y="8" width="1" height="32" fill="#626262"/><rect x="1134" y="8" width="1" height="32" fill="#626262"/><rect x="1272" y="8" width="1" height="32" fill="#626262"/><path d="M363.5,37 l4,3.5 l4,-3.5" fill="none" stroke="#262626" stroke-width="1.8" stroke-linecap="round" stroke-linejoin="round"/><path d="M406.5,37 l4,3.5 l4,-3.5" fill="none" stroke="#262626" stroke-width="1.8" stroke-linecap="round" stroke-linejoin="round"/><rect x="535" y="6" width="2" height="2" fill="#5a5a5a"/><rect x="539" y="6" width="2" height="2" fill="#5a5a5a"/><rect x="535" y="10" width="2" height="2" fill="#5a5a5a"/><rect x="539" y="10" width="2" height="2" fill="#5a5a5a"/><rect x="535" y="14" width="2" height="2" fill="#5a5a5a"/><rect x="539" y="14" width="2" height="2" fill="#5a5a5a"/><rect x="535" y="18" width="2" height="2" fill="#5a5a5a"/><rect x="539" y="18" width="2" height="2" fill="#5a5a5a"/><rect x="535" y="22" width="2" height="2" fill="#5a5a5a"/><rect x="539" y="22" width="2" height="2" fill="#5a5a5a"/><rect x="535" y="26" width="2" height="2" fill="#5a5a5a"/><rect x="539" y="26" width="2" height="2" fill="#5a5a5a"/><rect x="535" y="30" width="2" height="2" fill="#5a5a5a"/><rect x="539" y="30" width="2" height="2" fill="#5a5a5a"/><rect x="535" y="34" width="2" height="2" fill="#5a5a5a"/><rect x="539" y="34" width="2" height="2" fill="#5a5a5a"/><rect x="535" y="38" width="2" height="2" fill="#5a5a5a"/><rect x="539" y="38" width="2" height="2" fill="#5a5a5a"/><rect x="535" y="42" width="2" height="2" fill="#5a5a5a"/><rect x="539" y="42" width="2" height="2" fill="#5a5a5a"/><rect x="543" y="12" width="230" height="24.5" rx="4" fill="#5a5a5a"/><path d="M753,12 h16 q4,0 4,4 v16.5 q0,4 -4,4 h-16 z" fill="#4c4c4c"/><path d="M758.5,21.8 l4,4 l4,-4" fill="none" stroke="#f2f2f2" stroke-width="1.9" stroke-linecap="round" stroke-linejoin="round"/><path d="M547.5,24 q0,-2 3,-2.5 q1,-3 5,-2.5 q3.5,0.5 4,3 q2,1 1.5,3.5 q-0.5,2 -3,2 q-3,0 -4.5,-1.5 q-3,0.5 -6,-2 z" fill="#f4f4f4"/><path d="M551,23 h6 M553.5,25.5 h5" stroke="#555" stroke-width="0.9"/><text x="568" y="31.3" font-family="Liberation Sans" font-size="18" fill="#c6c6c6">Arch</text><rect x="783" y="6" width="2" height="2" fill="#5a5a5a"/><rect x="787" y="6" width="2" height="2" fill="#5a5a5a"/><rect x="783" y="10" width="2" height="2" fill="#5a5a5a"/><rect x="787" y="10" width="2" height="2" fill="#5a5a5a"/><rect x="783" y="14" width="2" height="2" fill="#5a5a5a"/><rect x="787" y="14" width="2" height="2" fill="#5a5a5a"/><rect x="783" y="18" width="2" height="2" fill="#5a5a5a"/><rect x="787" y="18" width="2" height="2" fill="#5a5a5a"/><rect x="783" y="22" width="2" height="2" fill="#5a5a5a"/><rect x="787" y="22" width="2" height="2" fill="#5a5a5a"/><rect x="783" y="26" width="2" height="2" fill="#5a5a5a"/><rect x="787" y="26" width="2" height="2" fill="#5a5a5a"/><rect x="783" y="30" width="2" height="2" fill="#5a5a5a"/><rect x="787" y="30" width="2" height="2" fill="#5a5a5a"/><rect x="783" y="34" width="2" height="2" fill="#5a5a5a"/><rect x="787" y="34" width="2" height="2" fill="#5a5a5a"/><rect x="783" y="38" width="2" height="2" fill="#5a5a5a"/><rect x="787" y="38" width="2" height="2" fill="#5a5a5a"/><rect x="783" y="42" width="2" height="2" fill="#5a5a5a"/><rect x="787" y="42" width="2" height="2" fill="#5a5a5a"/><path d="M926,37.3 l4.25,4 l4.25,-4" fill="none" stroke="#333333" stroke-width="1.8" stroke-linecap="round" stroke-linejoin="round"/><rect x="1329" y="6" width="2" height="2" fill="#5a5a5a"/><rect x="1333" y="6" width="2" height="2" fill="#5a5a5a"/><rect x="1329" y="10" width="2" height="2" fill="#5a5a5a"/><rect x="1333" y="10" width="2" height="2" fill="#5a5a5a"/><rect x="1329" y="14" width="2" height="2" fill="#5a5a5a"/><rect x="1333" y="14" width="2" height="2" fill="#5a5a5a"/><rect x="1329" y="18" width="2" height="2" fill="#5a5a5a"/><rect x="1333" y="18" width="2" height="2" fill="#5a5a5a"/><rect x="1329" y="22" width="2" height="2" fill="#5a5a5a"/><rect x="1333" y="22" width="2" height="2" fill="#5a5a5a"/><rect x="1329" y="26" width="2" height="2" fill="#5a5a5a"/><rect x="1333" y="26" width="2" height="2" fill="#5a5a5a"/><rect x="1329" y="30" width="2" height="2" fill="#5a5a5a"/><rect x="1333" y="30" width="2" height="2" fill="#5a5a5a"/><rect x="1329" y="34" width="2" height="2" fill="#5a5a5a"/><rect x="1333" y="34" width="2" height="2" fill="#5a5a5a"/><rect x="1329" y="38" width="2" height="2" fill="#5a5a5a"/><rect x="1333" y="38" width="2" height="2" fill="#5a5a5a"/><rect x="1329" y="42" width="2" height="2" fill="#5a5a5a"/><rect x="1333" y="42" width="2" height="2" fill="#5a5a5a"/></g>
<g id="row2"><rect x="8" y="55" width="2" height="2" fill="#5a5a5a"/><rect x="12" y="55" width="2" height="2" fill="#5a5a5a"/><rect x="8" y="59" width="2" height="2" fill="#5a5a5a"/><rect x="12" y="59" width="2" height="2" fill="#5a5a5a"/><rect x="8" y="63" width="2" height="2" fill="#5a5a5a"/><rect x="12" y="63" width="2" height="2" fill="#5a5a5a"/><rect x="8" y="67" width="2" height="2" fill="#5a5a5a"/><rect x="12" y="67" width="2" height="2" fill="#5a5a5a"/><rect x="8" y="71" width="2" height="2" fill="#5a5a5a"/><rect x="12" y="71" width="2" height="2" fill="#5a5a5a"/><rect x="8" y="75" width="2" height="2" fill="#5a5a5a"/><rect x="12" y="75" width="2" height="2" fill="#5a5a5a"/><rect x="8" y="79" width="2" height="2" fill="#5a5a5a"/><rect x="12" y="79" width="2" height="2" fill="#5a5a5a"/><rect x="8" y="83" width="2" height="2" fill="#5a5a5a"/><rect x="12" y="83" width="2" height="2" fill="#5a5a5a"/><rect x="8" y="87" width="2" height="2" fill="#5a5a5a"/><rect x="12" y="87" width="2" height="2" fill="#5a5a5a"/><rect x="8" y="91" width="2" height="2" fill="#5a5a5a"/><rect x="12" y="91" width="2" height="2" fill="#5a5a5a"/><rect x="112" y="55" width="2" height="2" fill="#5a5a5a"/><rect x="116" y="55" width="2" height="2" fill="#5a5a5a"/><rect x="112" y="59" width="2" height="2" fill="#5a5a5a"/><rect x="116" y="59" width="2" height="2" fill="#5a5a5a"/><rect x="112" y="63" width="2" height="2" fill="#5a5a5a"/><rect x="116" y="63" width="2" height="2" fill="#5a5a5a"/><rect x="112" y="67" width="2" height="2" fill="#5a5a5a"/><rect x="116" y="67" width="2" height="2" fill="#5a5a5a"/><rect x="112" y="71" width="2" height="2" fill="#5a5a5a"/><rect x="116" y="71" width="2" height="2" fill="#5a5a5a"/><rect x="112" y="75" width="2" height="2" fill="#5a5a5a"/><rect x="116" y="75" width="2" height="2" fill="#5a5a5a"/><rect x="112" y="79" width="2" height="2" fill="#5a5a5a"/><rect x="116" y="79" width="2" height="2" fill="#5a5a5a"/><rect x="112" y="83" width="2" height="2" fill="#5a5a5a"/><rect x="116" y="83" width="2" height="2" fill="#5a5a5a"/><rect x="112" y="87" width="2" height="2" fill="#5a5a5a"/><rect x="116" y="87" width="2" height="2" fill="#5a5a5a"/><rect x="112" y="91" width="2" height="2" fill="#5a5a5a"/><rect x="116" y="91" width="2" height="2" fill="#5a5a5a"/><rect x="524" y="55" width="2" height="2" fill="#5a5a5a"/><rect x="528" y="55" width="2" height="2" fill="#5a5a5a"/><rect x="524" y="59" width="2" height="2" fill="#5a5a5a"/><rect x="528" y="59" width="2" height="2" fill="#5a5a5a"/><rect x="524" y="63" width="2" height="2" fill="#5a5a5a"/><rect x="528" y="63" width="2" height="2" fill="#5a5a5a"/><rect x="524" y="67" width="2" height="2" fill="#5a5a5a"/><rect x="528" y="67" width="2" height="2" fill="#5a5a5a"/><rect x="524" y="71" width="2" height="2" fill="#5a5a5a"/><rect x="528" y="71" width="2" height="2" fill="#5a5a5a"/><rect x="524" y="75" width="2" height="2" fill="#5a5a5a"/><rect x="528" y="75" width="2" height="2" fill="#5a5a5a"/><rect x="524" y="79" width="2" height="2" fill="#5a5a5a"/><rect x="528" y="79" width="2" height="2" fill="#5a5a5a"/><rect x="524" y="83" width="2" height="2" fill="#5a5a5a"/><rect x="528" y="83" width="2" height="2" fill="#5a5a5a"/><rect x="524" y="87" width="2" height="2" fill="#5a5a5a"/><rect x="528" y="87" width="2" height="2" fill="#5a5a5a"/><rect x="524" y="91" width="2" height="2" fill="#5a5a5a"/><rect x="528" y="91" width="2" height="2" fill="#5a5a5a"/><rect x="1568.5" y="55" width="2" height="2" fill="#5a5a5a"/><rect x="1572.5" y="55" width="2" height="2" fill="#5a5a5a"/><rect x="1568.5" y="59" width="2" height="2" fill="#5a5a5a"/><rect x="1572.5" y="59" width="2" height="2" fill="#5a5a5a"/><rect x="1568.5" y="63" width="2" height="2" fill="#5a5a5a"/><rect x="1572.5" y="63" width="2" height="2" fill="#5a5a5a"/><rect x="1568.5" y="67" width="2" height="2" fill="#5a5a5a"/><rect x="1572.5" y="67" width="2" height="2" fill="#5a5a5a"/><rect x="1568.5" y="71" width="2" height="2" fill="#5a5a5a"/><rect x="1572.5" y="71" width="2" height="2" fill="#5a5a5a"/><rect x="1568.5" y="75" width="2" height="2" fill="#5a5a5a"/><rect x="1572.5" y="75" width="2" height="2" fill="#5a5a5a"/><rect x="1568.5" y="79" width="2" height="2" fill="#5a5a5a"/><rect x="1572.5" y="79" width="2" height="2" fill="#5a5a5a"/><rect x="1568.5" y="83" width="2" height="2" fill="#5a5a5a"/><rect x="1572.5" y="83" width="2" height="2" fill="#5a5a5a"/><rect x="1568.5" y="87" width="2" height="2" fill="#5a5a5a"/><rect x="1572.5" y="87" width="2" height="2" fill="#5a5a5a"/><rect x="1568.5" y="91" width="2" height="2" fill="#5a5a5a"/><rect x="1572.5" y="91" width="2" height="2" fill="#5a5a5a"/><g transform="translate(21,57)"><path d="M4.5,10.5 L13,3 L22,6.5 L13.5,14.5 Z" fill="#f9ec5e" stroke="#2e2900" stroke-width="1.1" stroke-linejoin="round"/><path d="M4.5,10.5 L13.5,14.5 V21.5 L4.5,17.5 Z" fill="#edd71c" stroke="#2e2900" stroke-width="1.1" stroke-linejoin="round"/><path d="M13.5,14.5 L22,6.5 V12 L13.5,20 Z" fill="#c9ae05" stroke="#2e2900" stroke-width="1.1" stroke-linejoin="round"/><path d="M13.5,20 L20,13.5 L28.5,17.5 L19.5,25 L13.5,22 Z" fill="#f9ec5e" stroke="#2e2900" stroke-width="1.1" stroke-linejoin="round"/><path d="M4.5,17.5 L13.5,21.5 L19.5,25 V29.5 L4.5,23 Z" fill="#edd71c" stroke="#2e2900" stroke-width="1.1" stroke-linejoin="round"/><path d="M19.5,25 L28.5,17.5 V22.5 L19.5,29.5 Z" fill="#c9ae05" stroke="#2e2900" stroke-width="1.1" stroke-linejoin="round"/></g>
<g transform="translate(64,57)">
<path d="M2.5,4 h9 l2,3 h10 v5 h-21 z" fill="#8c8c8c" stroke="#7a7a7a" stroke-width="0.8"/>
<rect x="4" y="6.5" width="18" height="5" fill="#a8a8a8"/>
<path d="M4.5,10 h24 l-0.8,15.5 q0,0.8 -0.8,0.8 h-22 q-0.8,0 -0.8,-0.8 z" fill="url(#gRb)" stroke="#4a78b8" stroke-width="0.9"/>
<path d="M5.5,11 h22" stroke="#b4d2f4" stroke-width="0.9"/>
</g>
<g transform="translate(538.5,57)"><path d="M2.1,6.6 L8.4,1.3 L29.6,10 L23.75,16 Z" fill="#f9ec5e" stroke="#2e2900" stroke-width="1.1" stroke-linejoin="round"/><path d="M2.1,6.6 L23.75,16 V29.75 L2.1,21 Z" fill="#edd71c" stroke="#2e2900" stroke-width="1.1" stroke-linejoin="round"/><path d="M23.75,16 L29.6,10 V22.9 L23.75,29.75 Z" fill="#c9ae05" stroke="#2e2900" stroke-width="1.1" stroke-linejoin="round"/><path d="M2.1,11.4 L23.75,20.6 L29.6,14.3 M2.1,16.2 L23.75,25.2 L29.6,18.6 M18.9,5.6 L13,11.3 V15.9 M7.5,13.7 V18.5 M18.5,18.4 V23 M13,20.8 V25.5 M26.7,17.4 V21.8 M26.7,13 V8.8" fill="none" stroke="#2e2900" stroke-width="1"/></g>
<g transform="translate(581.5,57)"><path d="M6,13 L12.5,11 L17.5,12.5 V28.5 L11,30.5 L6,29 Z" fill="#edd71c" stroke="#2e2900" stroke-width="1.1" stroke-linejoin="round"/><path d="M11,14 L17.5,12.5 V28.5 L11,30.5 Z" fill="#c9ae05" stroke="#2e2900" stroke-width="1.1" stroke-linejoin="round"/><path d="M19.5,11 L25,9.5 L30,11 V25.5 L24.5,27.5 L19.5,26 Z" fill="#edd71c" stroke="#2e2900" stroke-width="1.1" stroke-linejoin="round"/><path d="M24.5,12.5 L30,11 V25.5 L24.5,27.5 Z" fill="#c9ae05" stroke="#2e2900" stroke-width="1.1" stroke-linejoin="round"/><path d="M1,6.5 L23.5,2 L30.5,3.5 L8,8.5 Z" fill="#f9ec5e" stroke="#2e2900" stroke-width="1.1" stroke-linejoin="round"/><path d="M1,6.5 L8,8.5 V14 L1,12 Z" fill="#edd71c" stroke="#2e2900" stroke-width="1.1" stroke-linejoin="round"/><path d="M8,8.5 L30.5,3.5 V9 L8,14 Z" fill="url(#gY)" stroke="#2e2900" stroke-width="1.1" stroke-linejoin="round"/></g>
<g transform="translate(624.5,57)"><path d="M6,17.4 L18,7.4 L14,2.6 L2,12.6 Z" fill="url(#gY)" stroke="#2e2900" stroke-width="1.1" stroke-linejoin="round"/><circle cx="16.5" cy="4.8" r="3.1" fill="#e8d21a" stroke="#2e2900" stroke-width="1"/><circle cx="4" cy="15" r="3.1" fill="#f4e23c" stroke="#2e2900" stroke-width="1.1"/><path d="M11.5,17.5 L29.5,2 V9 L15.5,22.5 Z" fill="url(#gY)" stroke="#2e2900" stroke-width="1.1" stroke-linejoin="round"/><circle cx="13.2" cy="20.3" r="3.1" fill="#f4e23c" stroke="#2e2900" stroke-width="1.1"/><path d="M21,23 L29.5,15 V22.5 L25.5,27 Z" fill="url(#gY)" stroke="#2e2900" stroke-width="1.1" stroke-linejoin="round"/><circle cx="23.2" cy="25.5" r="3.1" fill="#f4e23c" stroke="#2e2900" stroke-width="1.1"/></g>
<g transform="translate(667,57)"><path d="M0.5,3.5 H30.5 V21.5 L25.5,26.5 H0.5 Z" fill="url(#gY)" stroke="#2e2900" stroke-width="1.1" stroke-linejoin="round"/><path d="M25.5,26.5 V21.5 H30.5 Z" fill="#bfa400" stroke="#2e2900" stroke-width="0.9" stroke-linejoin="round"/><path d="M10,7.5 H4.5 V21.5 H13 M4.5,14 H11 M15.5,7.5 H25.5 V20.5 H18.5 M21,7.5 V13 M13,21.5 V18 H17 M15.5,7.5 V9" fill="none" stroke="#2e2900" stroke-width="2.2"/></g>
<g transform="translate(709.5,57)"><path d="M0.5,14 L10.5,3 L19,13.5 V30 L0.5,27 Z" fill="#edd71c" stroke="#2e2900" stroke-width="1.1" stroke-linejoin="round"/><path d="M10.5,3 L22.5,1.5 L30.5,11 L19,13.5 Z" fill="#f9ec5e" stroke="#2e2900" stroke-width="1.1" stroke-linejoin="round"/><path d="M19,13.5 L30.5,11 V23 L19,30 Z" fill="#c9ae05" stroke="#2e2900" stroke-width="1.1" stroke-linejoin="round"/><path d="M6.5,27.8 V17 L11.5,17.5 V28.5 Z" fill="#fff" stroke="#2e2900" stroke-width="1"/><path d="M9,17.5 V28" stroke="#bbb" stroke-width="1"/></g>
<g transform="translate(753,57)"><path d="M1,21.5 L7.5,16.5 Q10,8 17,1.5 L30.5,6.5 Q24,10.5 21.5,17 Q19,22.5 14.5,26 Z" fill="url(#gY)" stroke="#2e2900" stroke-width="1.1" stroke-linejoin="round"/><path d="M1,21.5 L14.5,26 V30 L1,25 Z" fill="#edd71c" stroke="#2e2900" stroke-width="1.1" stroke-linejoin="round"/><path d="M14.5,26 Q19,22.5 21.5,17 Q24,10.5 30.5,6.5 V18 L14.5,30 Z" fill="#c9ae05" stroke="#2e2900" stroke-width="1.1" stroke-linejoin="round"/></g>
<g transform="translate(796,57)"><path d="M1,1.5 L4,1 L31,9 L28,9.5 Z" fill="#f9ec5e" stroke="#2e2900" stroke-width="1.1" stroke-linejoin="round"/><path d="M28,9.5 L31,9 V30 L28,30.5 Z" fill="#c9ae05" stroke="#2e2900" stroke-width="1.1" stroke-linejoin="round"/><path d="M1,1.5 L28,9.5 V30.5 L1,23 Z M4.5,6 V12.5 L13,15 V8.5 Z M16,9.5 V16 L24.5,18.5 V12 Z M4.5,15.5 V21 L13,23.5 V18 Z M16,19 V24.5 L24.5,27 V21.5 Z" fill="#edd71c" fill-rule="evenodd" stroke="#2e2900" stroke-width="1.1" stroke-linejoin="round"/><path d="M4.5,10 L7,8.8 L13,10.5 M16,13.5 L18.5,12.3 L24.5,14 M4.5,19 L7,17.8 L13,19.5 M16,22.5 L18.5,21.3 L24.5,23" fill="none" stroke="#2e2900" stroke-width="1"/></g>
<g transform="translate(839,57)"><path d="M1,22 L10.5,13 L12,16 Z" fill="#c9ae05" stroke="#2e2900" stroke-width="1.1" stroke-linejoin="round"/><path d="M1,22 L10.5,13 L11,17.5 Z" fill="#d4b906" stroke="#2e2900" stroke-width="0.8" stroke-linejoin="round"/><path d="M10.5,13 L24,4.5 L30,13.5 L16.5,26 Z" fill="url(#gY)" stroke="#2e2900" stroke-width="1.1" stroke-linejoin="round"/></g>
<g transform="translate(882,57)"><path d="M10,12 V31 M23,12 V31" stroke="#2e2900" stroke-width="4"/><path d="M10,12 V30.5 M23,12 V30.5" stroke="#e6cf18" stroke-width="2"/><circle cx="10" cy="7" r="4.8" fill="url(#gYs)" stroke="#2e2900" stroke-width="1"/><circle cx="23" cy="7" r="4.8" fill="url(#gYs)" stroke="#2e2900" stroke-width="1"/></g>
<g transform="translate(944,57)"><rect x="15" y="26" width="2" height="5" fill="#d8c010" stroke="#2e2900" stroke-width="0.8"/><circle cx="16" cy="14" r="12.5" fill="url(#gYs)" stroke="#2e2900" stroke-width="1.1"/><path d="M16,1.5 A12.5,12.5 0 0 1 16,26.5 Z" fill="#2e2900"/><path d="M17,3 L28,14 L17,25 Z" fill="#e6cf18"/><path d="M17,3 L28,14 L17,25 Z" fill="#2b2600"/><path d="M16.5,2 L28.2,14 L16.5,26 A12.5,12.5 0 0 0 28.5,14 A12.5,12.5 0 0 0 16.5,2 Z" fill="#e2cb14"/><text x="4.3" y="19" font-family="Liberation Sans" font-size="13.5" fill="#2b2600">A</text></g>
<g transform="translate(988,57)"><path d="M1.5,8 L11,1.5 L30.5,5.5 V23 L20,30.5 L1.5,25.5 Z" fill="#e3cb14"/><path d="M1.5,8 L11,1.5 L30.5,5.5 L20,12.5 Z" fill="#f2e036"/><path d="M1.5,8 L11,1.5 L30.5,5.5 V23 L20,30.5 L1.5,25.5 Z M1.5,8 L20,12.5 L30.5,5.5 M20,12.5 V30.5" fill="none" stroke="#2e2900" stroke-width="1.6" stroke-dasharray="3.5,2.3"/><circle cx="14.5" cy="15.5" r="6.8" fill="url(#gYs)" stroke="#2e2900" stroke-width="1"/><ellipse cx="12.8" cy="12.5" rx="1.6" ry="1.1" fill="#fff"/><path d="M18,19 q1.5,3 0.5,6 M10,24 q3,-2 7,0 M17,27 q1,2 0,3 M9,10 q2,-2 4,-1 M20,10 q2,1 2,3" fill="none" stroke="#8a7600" stroke-width="1.4"/></g>
<g transform="translate(1031,57)"><path d="M17.3,26.3 L17.3,23.2 L20.45,21.6 L20.45,18.5 L23.6,16.9 L23.6,13.8 L26.75,12.2 L26.75,9.1 L29.9,7.5 L29.9,19.9 Z" fill="#c9ae05" stroke="#2e2900" stroke-width="1.1" stroke-linejoin="round"/><path d="M1.5,23.8 L17.3,26.3 L17.3,23.2 L1.5,20.7 Z" fill="#edd71c" stroke="#2e2900" stroke-width="1.1" stroke-linejoin="round"/><path d="M1.5,20.7 L17.3,23.2 L20.45,21.6 L4.65,19.1 Z" fill="#f9ec5e" stroke="#2e2900" stroke-width="1.1" stroke-linejoin="round"/><path d="M4.65,19.1 L20.45,21.6 L20.45,18.5 L4.65,16 Z" fill="#edd71c" stroke="#2e2900" stroke-width="1.1" stroke-linejoin="round"/><path d="M4.65,16 L20.45,18.5 L23.6,16.9 L7.8,14.4 Z" fill="#f9ec5e" stroke="#2e2900" stroke-width="1.1" stroke-linejoin="round"/><path d="M7.8,14.4 L23.6,16.9 L23.6,13.8 L7.8,11.3 Z" fill="#edd71c" stroke="#2e2900" stroke-width="1.1" stroke-linejoin="round"/><path d="M7.8,11.3 L23.6,13.8 L26.75,12.2 L10.95,9.7 Z" fill="#f9ec5e" stroke="#2e2900" stroke-width="1.1" stroke-linejoin="round"/><path d="M10.95,9.7 L26.75,12.2 L26.75,9.1 L10.95,6.6 Z" fill="#edd71c" stroke="#2e2900" stroke-width="1.1" stroke-linejoin="round"/><path d="M10.95,6.6 L26.75,9.1 L29.9,7.5 L14.1,5 Z" fill="#f9ec5e" stroke="#2e2900" stroke-width="1.1" stroke-linejoin="round"/></g>
<g transform="translate(1074.5,57)"><path d="M1,2.5 L3.5,1 L14.5,5 V6.5 L17,7.5 V6 L31,11 L28.5,12.5 Z" fill="#f9ec5e" stroke="#2e2900" stroke-width="1.1" stroke-linejoin="round"/><path d="M28.5,12.5 L31,11 V29 L28.5,30.5 Z" fill="#c9ae05" stroke="#2e2900" stroke-width="1.1" stroke-linejoin="round"/><path d="M1,2.5 L13.5,7 V11.5 L16.5,12.5 V8 L28.5,12.5 V30.5 L16.5,26 V22.5 L13.5,21.5 V25 L1,20.5 Z" fill="url(#gYv)" stroke="#2e2900" stroke-width="1.1" stroke-linejoin="round"/><path d="M13.5,21.5 L15.5,20.5 V24 L13.5,25 Z M13.5,7 L15.5,6 M16.5,12.5 l1.5,-1" fill="#c9ae05" stroke="#2e2900" stroke-width="0.9" stroke-linejoin="round"/></g>
<g transform="translate(1137,57)"><path d="M4.5,5 L7,3.5 L9,4.5 V2.5 L11.5,1 L14.5,2.5 V14 L12.5,15 V5.5 L10.5,6.5 V16 L8.5,15 V7 L7,6 V27 L4.5,26 Z" fill="#edd71c" stroke="#2e2900" stroke-width="1.1" stroke-linejoin="round"/><path d="M7,16 L15,12.5 L26.5,15.5 L18.5,19.5 Z" fill="#f9ec5e" stroke="#2e2900" stroke-width="1.1" stroke-linejoin="round"/><path d="M7,16 L18.5,19.5 V22 L7,18.5 Z" fill="#edd71c" stroke="#2e2900" stroke-width="1.1" stroke-linejoin="round"/><path d="M18.5,19.5 L26.5,15.5 V18 L18.5,22 Z" fill="#c9ae05" stroke="#2e2900" stroke-width="1.1" stroke-linejoin="round"/><path d="M7,18.5 L9.5,19.3 V28 L7,27 Z M15,21 L18.5,22 V30.5 L15,29.5 Z" fill="#edd71c" stroke="#2e2900" stroke-width="1.1" stroke-linejoin="round"/><path d="M18.5,22 L20.5,21 V29.5 L18.5,30.5 Z M24.5,19 L26.5,18 V26 L24.5,27 Z" fill="#c9ae05" stroke="#2e2900" stroke-width="1.1" stroke-linejoin="round"/><path d="M12.5,5.5 l2,-1 M10.5,6.5 l-1.5,-0.7" fill="#c9ae05" stroke="#2e2900" stroke-width="0.9" stroke-linejoin="round"/></g>
<g transform="translate(1180,57)"><path d="M2,5.5 l4.25,-2.5 l4.25,2.5 l-4.25,2 z" fill="#f9ec5e" stroke="#2e2900" stroke-width="1" stroke-linejoin="round"/><path d="M2,5.5 l4.25,2 V30 H2 Z" fill="#f6e63e" stroke="#2e2900" stroke-width="1" stroke-linejoin="round"/><path d="M6.25,7.5 l4.25,-2 V30 H6.25 Z" fill="#e2c810" stroke="#2e2900" stroke-width="1" stroke-linejoin="round"/><path d="M12,9.5 l4.25,-2.5 l4.25,2.5 l-4.25,2 z" fill="#f9ec5e" stroke="#2e2900" stroke-width="1" stroke-linejoin="round"/><path d="M12,9.5 l4.25,2 V30 H12 Z" fill="#f6e63e" stroke="#2e2900" stroke-width="1" stroke-linejoin="round"/><path d="M16.25,11.5 l4.25,-2 V30 H16.25 Z" fill="#e2c810" stroke="#2e2900" stroke-width="1" stroke-linejoin="round"/><path d="M22,13.5 l4.25,-2.5 l4.25,2.5 l-4.25,2 z" fill="#f9ec5e" stroke="#2e2900" stroke-width="1" stroke-linejoin="round"/><path d="M22,13.5 l4.25,2 V30 H22 Z" fill="#f6e63e" stroke="#2e2900" stroke-width="1" stroke-linejoin="round"/><path d="M26.25,15.5 l4.25,-2 V30 H26.25 Z" fill="#e2c810" stroke="#2e2900" stroke-width="1" stroke-linejoin="round"/></g>
<g transform="translate(1224,57)"><circle cx="20.4" cy="8" r="6.8" fill="url(#gYs)" stroke="#2e2900" stroke-width="1.1"/><ellipse cx="17.9" cy="5.2" rx="1.5" ry="1.1" fill="#fffbe0" transform="rotate(-35 17.9 5.2)"/><circle cx="8" cy="18.5" r="6.8" fill="url(#gYs)" stroke="#2e2900" stroke-width="1.1"/><ellipse cx="5.5" cy="15.7" rx="1.5" ry="1.1" fill="#fffbe0" transform="rotate(-35 5.5 15.7)"/><circle cx="23" cy="23" r="6.8" fill="url(#gYs)" stroke="#2e2900" stroke-width="1.1"/><ellipse cx="20.5" cy="20.2" rx="1.5" ry="1.1" fill="#fffbe0" transform="rotate(-35 20.5 20.2)"/></g>
<g transform="translate(1286,57)"><rect x="1.5" y="4.5" width="29" height="24" fill="url(#gYv)" stroke="#2e2900" stroke-width="1.1"/><path d="M1.5,10.5 h29 M1.5,16.5 h29 M1.5,22.5 h29 M10.5,4.5 v24" stroke="#2e2900" stroke-width="1.1"/><path d="M2.5,5.8 h7 M11.5,5.8 h18 M2.5,11.8 h7 M11.5,11.8 h18 M2.5,17.8 h7 M11.5,17.8 h18 M2.5,23.8 h7 M11.5,23.8 h18" stroke="#fcf07a" stroke-width="1"/></g>
<g transform="translate(1329,57)"><path d="M9,2.5 L25,8.5 Q31,11 30.5,18 Q30,26 23,28.5 L7,22.5 Z" fill="url(#gY)" stroke="#2e2900" stroke-width="1.1" stroke-linejoin="round"/><ellipse cx="8.5" cy="12.5" rx="6.8" ry="10.2" transform="rotate(14 8.5 12.5)" fill="#f5e540" stroke="#2e2900" stroke-width="1.1"/><ellipse cx="8.7" cy="12.5" rx="3.6" ry="6" transform="rotate(14 8.7 12.5)" fill="#d9bf0a" stroke="#2e2900" stroke-width="1"/></g>
<g transform="translate(1391,57)"><path d="M5.5,3.5 L25,8 V30.5 L5.5,24.5 Z" fill="#e41818" stroke="#8a0a0a" stroke-width="0.8"/><path d="M19,5 q3,-1.5 6.5,0 q3,1.5 3,4 v12 q0,2 -3,3.5" fill="none" stroke="#0b1a2c" stroke-width="2.8" stroke-dasharray="2.2,1.8"/><path d="M19,5 q3,-1.5 6.5,0 q3,1.5 3,4 v12 q0,2 -3,3.5" fill="none" stroke="#6a9ad6" stroke-width="1.5" stroke-dasharray="2.2,1.8"/><path d="M2,11.5 L9.5,8.5 L22,11 L15,14.5 Z" fill="#8ab4e2" stroke="#0b1a2c" stroke-width="1.1" stroke-linejoin="round"/><path d="M2,11.5 L15,14.5 V27.5 L2,24 Z" fill="url(#gB2)" stroke="#0b1a2c" stroke-width="1.1" stroke-linejoin="round"/><path d="M15,14.5 L22,11 V23.5 L15,27.5 Z" fill="#2e5fa2" stroke="#0b1a2c" stroke-width="1.1" stroke-linejoin="round"/></g>
<g transform="translate(1434.6,57)"><ellipse cx="16" cy="30.5" rx="10" ry="1.5" fill="#5c5c5c" opacity="0.6"/><path d="M12,2 h8 v9.8 h9.8 v8 h-9.8 v9.8 h-8 v-9.8 h-9.8 v-8 h9.8 z" fill="url(#gB)" stroke="#0b1a2c" stroke-width="1.2"/><path d="M13.2,3.2 h5.6 v9.8 h9.8 v5.6 h-9.8 v9.8 h-5.6 v-9.8 h-9.8 v-5.6 h9.8 z" fill="none" stroke="#8ab6e6" stroke-width="0.8"/></g>
<g transform="translate(1477,57)"><ellipse cx="16" cy="25" rx="10" ry="1.5" fill="#5c5c5c" opacity="0.6"/><rect x="2" y="11.8" width="28" height="8" fill="url(#gB2)" stroke="#0b1a2c" stroke-width="1.2"/><rect x="3.2" y="13" width="25.6" height="5.6" fill="none" stroke="#8ab6e6" stroke-width="0.8"/></g>
<g transform="translate(1520,57)"><path d="M2,18 Q1,22.5 5,24.5 Q14,29.5 24,30 Q30.5,30 31,25 Q31,22 28.5,21 Z" fill="#5b8fd0" stroke="#0b1a2c" stroke-width="1.1"/><path d="M2.5,19 Q2,8 9,3 Q15,-0.5 21,3.5 Q28,8.5 28.5,22 Q28,26 22,25.5 Q10,24 2.5,19 Z" fill="url(#gB2)" stroke="#0b1a2c" stroke-width="1.1"/><path d="M13,2 Q19,6 20,15 M17,1.8 Q23,6 24,14 M9,3.5 Q15,8 16,16" fill="none" stroke="#16305a" stroke-width="1.5"/></g>
<path d="M925.5,86.3 l4.25,4 l4.25,-4" fill="none" stroke="#333333" stroke-width="1.8" stroke-linecap="round" stroke-linejoin="round"/><path d="M1117.5,86.3 l4.25,4 l4.25,-4" fill="none" stroke="#333333" stroke-width="1.8" stroke-linecap="round" stroke-linejoin="round"/><path d="M1267,86.3 l4.25,4 l4.25,-4" fill="none" stroke="#333333" stroke-width="1.8" stroke-linecap="round" stroke-linejoin="round"/><path d="M1373,86.3 l4.25,4 l4.25,-4" fill="none" stroke="#333333" stroke-width="1.8" stroke-linecap="round" stroke-linejoin="round"/><path d="M1587,82.7 L1607,63" fill="none" stroke="#4a4a4a" stroke-width="3.2" stroke-linecap="round"/><path d="M1587,82.7 L1607,63" fill="none" stroke="#f4f4f4" stroke-width="1.8" stroke-linecap="round"/><circle cx="1607" cy="63" r="4.3" fill="url(#gYs)" stroke="#3a3400" stroke-width="0.9"/><circle cx="1587" cy="82.7" r="4.3" fill="url(#gYs)" stroke="#3a3400" stroke-width="0.9"/><path d="M1630.7,82.7 L1635.7,70 L1644,82.7 L1651,63" fill="none" stroke="#4a4a4a" stroke-width="3.2" stroke-linecap="round"/><path d="M1630.7,82.7 L1635.7,70 L1644,82.7 L1651,63" fill="none" stroke="#f4f4f4" stroke-width="1.8" stroke-linecap="round"/><circle cx="1630.7" cy="82.7" r="4.3" fill="url(#gYs)" stroke="#3a3400" stroke-width="0.9"/><circle cx="1635.7" cy="70" r="4.3" fill="url(#gYs)" stroke="#3a3400" stroke-width="0.9"/><circle cx="1644" cy="82.7" r="4.3" fill="url(#gYs)" stroke="#3a3400" stroke-width="0.9"/><circle cx="1651" cy="63" r="4.3" fill="url(#gYs)" stroke="#3a3400" stroke-width="0.9"/><g transform="translate(0.5,0)"><path d="M1694.5,70.5 A12.5,12.5 0 1 0 1694.5,75.5" fill="none" stroke="#4a4a4a" stroke-width="3.2" stroke-linecap="round"/><path d="M1694.5,70.5 A12.5,12.5 0 1 0 1694.5,75.5" fill="none" stroke="#f4f4f4" stroke-width="1.8" stroke-linecap="round"/><circle cx="1682.5" cy="73" r="4.3" fill="url(#gYs)" stroke="#3a3400" stroke-width="0.9"/><circle cx="1693.7" cy="73" r="4.3" fill="url(#gYs)" stroke="#3a3400" stroke-width="0.9"/></g><g transform="translate(0.6,0.2)"><path d="M1720,63.5 Q1733,66 1736,80" fill="none" stroke="#4a4a4a" stroke-width="3.2" stroke-linecap="round"/><path d="M1720,63.5 Q1733,66 1736,80" fill="none" stroke="#f4f4f4" stroke-width="1.8" stroke-linecap="round"/><circle cx="1717.6" cy="63" r="4.3" fill="url(#gYs)" stroke="#3a3400" stroke-width="0.9"/><circle cx="1717.6" cy="81.7" r="4.3" fill="url(#gYs)" stroke="#3a3400" stroke-width="0.9"/><circle cx="1736.4" cy="81.7" r="4.3" fill="url(#gYs)" stroke="#3a3400" stroke-width="0.9"/></g><g transform="translate(1,0.3)"><path d="M1755.5,72.7 a13.5,5 0 1 0 27,0 a13.5,5 0 1 0 -27,0" fill="none" stroke="#4a4a4a" stroke-width="3.6" stroke-linecap="round"/><path d="M1755.5,72.7 a13.5,5 0 1 0 27,0 a13.5,5 0 1 0 -27,0" fill="none" stroke="#f4f4f4" stroke-width="2.2" stroke-linecap="round"/><circle cx="1779" cy="63" r="4.3" fill="url(#gYs)" stroke="#3a3400" stroke-width="0.9"/><circle cx="1759" cy="83" r="4.3" fill="url(#gYs)" stroke="#3a3400" stroke-width="0.9"/></g><g transform="translate(0.9,0)"><path d="M1812.5,60.5 L1799,67 L1801,81.5 L1816,85 L1822,72 Z" fill="none" stroke="#4a4a4a" stroke-width="3.6" stroke-linecap="round"/><path d="M1812.5,60.5 L1799,67 L1801,81.5 L1816,85 L1822,72 Z" fill="none" stroke="#f4f4f4" stroke-width="2.2" stroke-linecap="round"/><circle cx="1810" cy="73.5" r="4.3" fill="url(#gYs)" stroke="#3a3400" stroke-width="0.9"/><circle cx="1822" cy="71" r="4.3" fill="url(#gYs)" stroke="#3a3400" stroke-width="0.9"/></g><path d="M1838,69 l3,3 l-3,3 M1842,69 l3,3 l-3,3" fill="none" stroke="#0c0c0c" stroke-width="1.4"/><rect x="121.5" y="57.5" width="63" height="30.5" rx="4" fill="url(#gBtn)" stroke="#595959" stroke-width="1"/><path d="M125.5,68 L137,63 V78 L125.5,83 Z" fill="#22ccd0" stroke="#06363a" stroke-width="1"/><path d="M128,71.5 L134.5,68.5 V75 L128,78 Z" fill="#f4f4f4" stroke="#4a6a6a" stroke-width="0.6"/><path d="M124,63 V84 M123,70 L140,62.5 M123,80 L140,72.5 M138,76 V86 M133,78 V85 M135,86 l6,-3" stroke="#14484a" stroke-width="0.7" fill="none"/><text x="146" y="79.3" font-family="Liberation Sans" font-size="18" fill="#e4e4e4">Auto</text><rect x="188.5" y="57.5" width="18" height="30.5" rx="4" fill="url(#gBtn)" stroke="#595959" stroke-width="1"/><path d="M190.5,74.5 L197,71.5 L200,68 L206,67 L203,73.5 L198.5,76 L196.5,74.5 L191,76.5 Z" fill="#22ccd0" stroke="#0c6c70" stroke-width="0.7"/><rect x="210.5" y="57.5" width="18" height="30.5" rx="4" fill="url(#gBtn)" stroke="#595959" stroke-width="1"/><rect x="212" y="65" width="15.5" height="15.8" fill="#000"/><rect x="232.5" y="57.5" width="18" height="30.5" rx="4" fill="url(#gBtn)" stroke="#595959" stroke-width="1"/><rect x="233.7" y="65" width="15.8" height="15.8" fill="#dcdcdc"/><rect x="254.5" y="56" width="72" height="33.5" rx="4" fill="#5b5b5b"/><path d="M306,56 h16.5 q4,0 4,4 v25.5 q0,4 -4,4 h-16.5 z" fill="#4e4e4e"/><path d="M312.05,68 l4.2,-4.2 l4.2,4.2 M312.05,78.5 l4.2,4.2 l4.2,-4.2" fill="none" stroke="#eeeeee" stroke-width="1.9" stroke-linecap="round" stroke-linejoin="round"/><text x="259" y="80" font-family="Liberation Sans" font-size="18" fill="#c4c4cc">2px</text><rect x="331" y="56" width="89.5" height="33.5" rx="4" fill="#5b5b5b"/><path d="M400.5,56 h16 q4,0 4,4 v25.5 q0,4 -4,4 h-16 z" fill="#4e4e4e"/><path d="M406.3,68 l4.2,-4.2 l4.2,4.2 M406.3,78.5 l4.2,4.2 l4.2,-4.2" fill="none" stroke="#eeeeee" stroke-width="1.9" stroke-linecap="round" stroke-linejoin="round"/><text x="335.5" y="80" font-family="Liberation Sans" font-size="18" fill="#c4c4cc">0,200</text><rect x="424.5" y="57.5" width="18" height="30.5" rx="4" fill="url(#gBtn)" stroke="#595959" stroke-width="1"/><rect x="425.5" y="64.5" width="8" height="17" fill="#dadada" stroke="#666" stroke-width="0.6"/><rect x="426.5" y="66" width="6" height="2" fill="#e02020"/><rect x="426.5" y="70" width="6" height="2" fill="#e8d020"/><rect x="426.5" y="74" width="6" height="2" fill="#999"/><rect x="426.5" y="78" width="6" height="2" fill="#40c030"/><path d="M431,70.5 h6 v-3 l5.5,5.5 l-5.5,5.5 v-3 h-6 z" fill="#5f96d8" stroke="#1d3c6a" stroke-width="0.7"/><rect x="446.5" y="57.5" width="66" height="30.5" rx="4" fill="url(#gBtn)" stroke="#595959" stroke-width="1"/><path d="M447.5,66 h6 l1.5,2 h10 v12.5 h-17.5 z" fill="#e01a1a" stroke="#8c0c0c" stroke-width="0.7"/><path d="M454.5,64.5 h4 v6.5 h3 l-5,5.5 l-5,-5.5 h3 z" fill="#4f88d0" stroke="#16345e" stroke-width="0.7"/><text x="471" y="79.3" font-family="Liberation Sans" font-size="18" fill="#e6e6e6">None</text></g>
<g id="right"><rect x="1821.3" y="105.5" width="1.8" height="3" fill="#f0f0f0"/><rect x="1824.3" y="105.5" width="1.8" height="3" fill="#f0f0f0"/><rect x="1827.3" y="105.5" width="1.8" height="3" fill="#f0f0f0"/><path d="M1815.3,122 V148 M1824,122 V148 M1833,122 V148 M1811,126.4 H1838 M1811,134.9 H1838 M1811,143.4 H1838" transform="translate(0.6,0.8)" stroke="#3c3c3c" stroke-width="2.6" stroke-linecap="round" fill="none"/><path d="M1815.3,122 V148 M1824,122 V148 M1833,122 V148 M1811,126.4 H1838 M1811,134.9 H1838 M1811,143.4 H1838" stroke="#f2f2f2" stroke-width="2" stroke-linecap="round" fill="none"/><rect x="1804.5" y="159.5" width="40" height="40" rx="4" fill="#6c7488" stroke="#6c99ec" stroke-width="1"/><rect x="1804.5" y="204.5" width="40" height="40" rx="4" fill="#6c7488" stroke="#6c99ec" stroke-width="1"/><rect x="1804.5" y="249.5" width="40" height="40" rx="4" fill="#6c7488" stroke="#6c99ec" stroke-width="1"/><rect x="1804.5" y="294.5" width="40" height="40" rx="4" fill="#6c7488" stroke="#6c99ec" stroke-width="1"/><rect x="1804.5" y="339.5" width="40" height="40" rx="4" fill="#6c7488" stroke="#6c99ec" stroke-width="1"/><rect x="1804.5" y="470.5" width="40" height="40" rx="4" fill="#6c7488" stroke="#6c99ec" stroke-width="1"/><rect x="1804.5" y="515.5" width="40" height="40" rx="4" fill="#6c7488" stroke="#6c99ec" stroke-width="1"/><rect x="1804.5" y="603.5" width="40" height="40" rx="4" fill="#6c7488" stroke="#6c99ec" stroke-width="1"/><rect x="1804.5" y="648.5" width="40" height="40" rx="4" fill="#6c7488" stroke="#6c99ec" stroke-width="1"/><rect x="1804.5" y="693.5" width="40" height="40" rx="4" fill="#6c7488" stroke="#6c99ec" stroke-width="1"/><rect x="1804.5" y="738.5" width="40" height="40" rx="4" fill="#6c7488" stroke="#6c99ec" stroke-width="1"/><path d="M1818.3,178 V172.5 a5.7,5.7 0 0 1 11.4,0 V178" fill="none" stroke="#06363a" stroke-width="4.4"/><path d="M1818.3,178 V172.5 a5.7,5.7 0 0 1 11.4,0 V178" fill="none" stroke="#2edde0" stroke-width="2.4"/><rect x="1814.5" y="177.5" width="18.8" height="14.5" rx="1" fill="url(#gCv)" stroke="#06363a" stroke-width="1.1"/><path d="M1816,182 h16 M1816,185.5 h16 M1816,189 h16" stroke="#0c8a8c" stroke-width="1"/><circle cx="1828.8" cy="215.6" r="4.2" fill="url(#gC)" stroke="#06363a" stroke-width="1.1"/><path d="M1810.64,223.99 L1829.84,235.19 L1832.16,231.21 L1812.96,220.01 Z" fill="url(#gC)" stroke="#06363a" stroke-width="1.1" stroke-linejoin="round"/><circle cx="1814" cy="268.8" r="3.2" fill="url(#gC)" stroke="#06363a" stroke-width="1.1"/><circle cx="1824" cy="268.8" r="3.2" fill="url(#gC)" stroke="#06363a" stroke-width="1.1"/><circle cx="1834" cy="268.8" r="3.2" fill="url(#gC)" stroke="#06363a" stroke-width="1.1"/><path d="M1816.57,304.84 L1835.07,316.54 L1837.53,312.66 L1819.03,300.96 Z" fill="url(#gC)" stroke="#06363a" stroke-width="1.1" stroke-linejoin="round"/><path d="M1810.02,314.67 L1829.52,326.37 L1831.88,322.43 L1812.38,310.73 Z" fill="url(#gC)" stroke="#06363a" stroke-width="1.1" stroke-linejoin="round"/><path d="M1817.4,346 V372.8 M1830.7,346 V372.8 M1810.5,352.4 H1837.5 M1810.5,365.3 H1837.5" stroke="#06363a" stroke-width="4.6" stroke-linecap="round" fill="none"/><path d="M1817.4,346 V372.8 M1830.7,346 V372.8 M1810.5,352.4 H1837.5 M1810.5,365.3 H1837.5" stroke="#2edde0" stroke-width="2.6" stroke-linecap="round" fill="none"/><path d="M1817.98,410.76 L1836.78,394.96 L1833.82,391.44 L1815.02,407.24 Z" fill="url(#gC)" stroke="#06363a" stroke-width="1.1" stroke-linejoin="round"/><circle cx="1815.9" cy="409.5" r="5.3" fill="url(#gC)" stroke="#06363a" stroke-width="1.1"/><path d="M1812.56,458.69 L1837.36,435.69 L1834.24,432.31 L1809.44,455.31 Z" fill="url(#gC)" stroke="#06363a" stroke-width="1.1" stroke-linejoin="round"/><circle cx="1823.5" cy="446" r="6" fill="url(#gC)" stroke="#06363a" stroke-width="1.1"/><path d="M1820.6,479.5 h6.3 v14.5 h11.7 v6.3 h-29.3 v-6.3 h11.3 z" fill="url(#gCv)" stroke="#06363a" stroke-width="1.1" stroke-linejoin="round"/><circle cx="1824" cy="534.8" r="10" fill="none" stroke="#06363a" stroke-width="2.8"/><circle cx="1824" cy="534.8" r="10" fill="none" stroke="#22c8cc" stroke-width="1.2"/><circle cx="1824" cy="524.7" r="4.4" fill="url(#gC)" stroke="#06363a" stroke-width="1.1"/><circle cx="1813.7" cy="535" r="4.4" fill="url(#gC)" stroke="#06363a" stroke-width="1.1"/><circle cx="1834" cy="535" r="4.4" fill="url(#gC)" stroke="#06363a" stroke-width="1.1"/><circle cx="1824" cy="544.8" r="4.4" fill="url(#gC)" stroke="#06363a" stroke-width="1.1"/><circle cx="1824" cy="578.7" r="11" fill="none" stroke="#06363a" stroke-width="5.4"/><circle cx="1824" cy="578.7" r="11" fill="none" stroke="#28d4d8" stroke-width="3.4"/><circle cx="1824" cy="578.7" r="4.3" fill="url(#gC)" stroke="#06363a" stroke-width="1.1"/><path d="M1821.8,612.5 h4.4 v8 h8 v4.4 h-8 v8 h-4.4 v-8 h-8 v-4.4 h8 z" fill="url(#gCv)" stroke="#06363a" stroke-width="1.1" stroke-linejoin="round"/><path d="M1810.5,658.5 L1814.5,654.5 L1824,664 L1833.5,654.5 L1837.5,658.5 L1828,668 L1837.5,677.5 L1833.5,681.5 L1824,672 L1814.5,681.5 L1810.5,677.5 L1820,668 Z" fill="url(#gC)" stroke="#06363a" stroke-width="1.1" stroke-linejoin="round"/><path d="M1818,705.5 L1823.5,699.5 H1837.5 L1832,705.5 Z" fill="#3ae4e6" stroke="#06363a" stroke-width="1.1" stroke-linejoin="round"/><path d="M1832,705.5 L1837.5,699.5 V714.5 L1832,721 Z" fill="#0fa4a8" stroke="#06363a" stroke-width="1.1" stroke-linejoin="round"/><rect x="1818" y="705.5" width="14" height="15.5" fill="url(#gC)" stroke="#06363a" stroke-width="1.1"/><circle cx="1816.3" cy="720.4" r="5.8" fill="url(#gC)" stroke="#06363a" stroke-width="1.1"/><path d="M1820.6,767 V754.4 H1834.8 V759 M1820.6,767 H1826.3" fill="none" stroke="#06363a" stroke-width="3.6" stroke-linecap="round" stroke-linejoin="round"/><path d="M1820.6,767 V754.4 H1834.8 V759 M1820.6,767 H1826.3" fill="none" stroke="#3ae4e6" stroke-width="1.8" stroke-linecap="round" stroke-linejoin="round"/><text x="1819" y="751" font-family="Liberation Mono" font-weight="bold" font-size="8.5" fill="#0a5458" textLength="17">1&#46;00</text><text transform="translate(1817,770) rotate(-90)" font-family="Liberation Mono" font-weight="bold" font-size="8.5" fill="#0a5458" textLength="17">1&#46;00</text><rect x="1810" y="787.5" width="28.5" height="28.5" rx="1.5" fill="url(#gC)" stroke="#06363a" stroke-width="1.2"/><circle cx="1818.7" cy="805.8" r="4.3" fill="#25cfd2" stroke="#06363a" stroke-width="1.1"/></g>
<g id="small"><g transform="translate(25.4,211.3) scale(0.46)"><path d="M15.8,1 l5.5,6.5 h-3.7 v6.5 h6.5 v-3.7 l6.5,5.5 l-6.5,5.5 v-3.7 h-6.5 v6.5 h3.7 l-5.5,6.5 l-5.5,-6.5 h3.7 v-6.5 h-6.5 v3.7 l-6.5,-5.5 l6.5,-5.5 v3.7 h6.5 v-6.5 h-3.7 z" fill="url(#gB)" stroke="#0b1a2c" stroke-width="1.2" stroke-linejoin="round" /></g><g transform="translate(25.4,244.3) scale(0.46)">
<path d="M5.5,17 A10.8,10.8 0 1 0 18,7.2" fill="none" stroke="#0b1a2c" stroke-width="5.2"/>
<path d="M8.5,2.5 L20.5,1.5 L16.5,12.5 Z" fill="#79a6d8" stroke="#0b1a2c" stroke-width="1.2" stroke-linejoin="round"/>
<path d="M5.5,17 A10.8,10.8 0 1 0 18,7.2" fill="none" stroke="#5b8fcc" stroke-width="3"/>
<path d="M3,16.5 h5" stroke="#0b1a2c" stroke-width="1.2"/>
</g><g transform="translate(25.4,277.3) scale(0.46)">
<rect x="2.6" y="2.6" width="26.8" height="26.8" fill="none" stroke="#0b1a2c" stroke-width="3.3" stroke-dasharray="4.2,2.1"/>
<rect x="2.6" y="2.6" width="26.8" height="26.8" fill="none" stroke="#5a8fd2" stroke-width="1.8" stroke-dasharray="3.4,2.9" stroke-dashoffset="-0.4"/>
<rect x="1" y="16.5" width="14" height="14.5" fill="#6f6f6f"/>
<rect x="1.8" y="17.3" width="12.5" height="13" fill="url(#gB)" stroke="#0b1a2c" stroke-width="1.2"/>
<rect x="4.8" y="20.3" width="6.5" height="7" fill="#6f6f6f" stroke="#0b1a2c" stroke-width="1.2"/>
<path d="M16,20.5 L21.5,15 L19.5,13 L26,11.5 L24.5,18 L22.5,16 L17,21.5 Z" fill="#6a9ad2" stroke="#0b1a2c" stroke-width="1" stroke-linejoin="round"/>
</g><g transform="translate(25.4,310.3) scale(0.46)">
<path d="M2.5,9.5 L8.5,3 H27.5 V16 Q27.5,26 15.5,28.5" fill="none" stroke="#0b1a2c" stroke-width="4.2" stroke-linecap="round" stroke-linejoin="round"/>
<path d="M2.5,9.5 L8.5,3 H27.5 V16 Q27.5,26 15.5,28.5" fill="none" stroke="#6a9ad2" stroke-width="2.2" stroke-linecap="round" stroke-linejoin="round"/>
<path d="M9.5,14 L12.5,11 H20 Q20,18.5 14,20.5" fill="none" stroke="#0b1a2c" stroke-width="4.2" stroke-linecap="round" stroke-linejoin="round"/>
<path d="M9.5,14 L12.5,11 H20 Q20,18.5 14,20.5" fill="none" stroke="#6a9ad2" stroke-width="2.2" stroke-linecap="round" stroke-linejoin="round"/>
</g><g transform="translate(25.4,343.3) scale(0.46)"><path d="M14.5,2 h3 v27.5 h-3 z" fill="url(#gB)" stroke="#0b1a2c" stroke-width="1.2" stroke-linejoin="round" /><path d="M1.5,15.7 l6,-6 v3.7 h4 v4.6 h-4 v3.7 z" fill="url(#gB)" stroke="#0b1a2c" stroke-width="1.2" stroke-linejoin="round" /><path d="M30.5,15.7 l-6,-6 v3.7 h-4 v4.6 h4 v3.7 z" fill="url(#gB)" stroke="#0b1a2c" stroke-width="1.2" stroke-linejoin="round" /></g><g transform="translate(25.4,376.3) scale(0.46)"><path d="M16,1 L28.5,14.5 H21.5 V30 H10.5 V14.5 H3.5 Z" fill="url(#gB)" stroke="#0b1a2c" stroke-width="1.2" stroke-linejoin="round" /></g><g transform="translate(25.4,409.3) scale(0.46)"><path d="M16,30.5 L28.5,17 H21.5 V1.5 H10.5 V17 H3.5 Z" fill="url(#gB)" stroke="#0b1a2c" stroke-width="1.2" stroke-linejoin="round" /></g><path d="M26,447 L36,442.5 L38.5,452.5 L32.5,451 L29.5,456 Z" fill="#3f74b5" stroke="#0b1a2c" stroke-width="0.9" stroke-linejoin="round"/><path d="M28,446.5 l3,5 M31,445 l3,5.5 M34,443.8 l2.5,6" stroke="#16305a" stroke-width="0.7"/><circle cx="33" cy="451.5" r="1.2" fill="#fff"/><rect x="30.5" y="479.5" width="9" height="9" fill="#ececec" stroke="#555" stroke-width="0.7"/><path d="M30.5,487 h9 v1.5 h-9 z" fill="#fff"/><path d="M25.5,479.5 h5 v-2.5 l5,4.5 l-5,4.5 v-2.5 h-5 z" fill="#4f86cc" stroke="#0b1a2c" stroke-width="0.8" stroke-linejoin="round"/><path d="M409.5,109.8 h-4 v4 M412.5,109.8 h4 v4 M409.5,120.8 h-4 v-4 M412.5,120.8 h4 v-4 M405.5,109.8 l3.5,3.5 M416.5,109.8 l-3.5,3.5 M405.5,120.8 l3.5,-3.5 M416.5,120.8 l-3.5,-3.5" fill="none" stroke="#3e4444" stroke-width="1.5"/><path d="M424,109.8 l10.5,10.5 M434.5,109.8 l-10.5,10.5" stroke="#3e3e3e" stroke-width="2.4" stroke-linecap="round"/><path d="M1764.5,900.8 h-4 v4 M1767.5,900.8 h4 v4 M1764.5,911.8 h-4 v-4 M1767.5,911.8 h4 v-4 M1760.5,900.8 l3.5,3.5 M1771.5,900.8 l-3.5,3.5 M1760.5,911.8 l3.5,-3.5 M1771.5,911.8 l-3.5,-3.5" fill="none" stroke="#3e4444" stroke-width="1.5"/><path d="M1779,900.8 l10.5,10.5 M1789.5,900.8 l-10.5,10.5" stroke="#3e3e3e" stroke-width="2.4" stroke-linecap="round"/><path d="M421.7,187.7 l4,-4 l4,4" fill="none" stroke="#f4f4f4" stroke-width="1.9" stroke-linecap="round" stroke-linejoin="round"/><path d="M450,469 V507" stroke="#303030" stroke-width="2" stroke-dasharray="5.4,2.7"/><path d="M880.5,884 H919" stroke="#303030" stroke-width="2" stroke-dasharray="5.5,2.6"/><path d="M461.4,853.3 h8.5 v3 h-5 v3 h3.5 v3 h-3.5 v6 h-3.5 z" fill="#e01c1c" stroke="#8c1010" stroke-width="0.7"/><circle cx="471.79999999999995" cy="862.9" r="4" fill="#4a78c8" stroke="#1a3878" stroke-width="1.5" stroke-dasharray="1.7,1.4"/><circle cx="471.79999999999995" cy="862.9" r="1.7" fill="#c8d8f4" stroke="#1a3878" stroke-width="0.7"/><path d="M610.4,853.3 h8.5 v3 h-5 v3 h3.5 v3 h-3.5 v6 h-3.5 z" fill="#e01c1c" stroke="#8c1010" stroke-width="0.7"/><circle cx="620.8" cy="862.9" r="4" fill="#4a78c8" stroke="#1a3878" stroke-width="1.5" stroke-dasharray="1.7,1.4"/><circle cx="620.8" cy="862.9" r="1.7" fill="#c8d8f4" stroke="#1a3878" stroke-width="0.7"/><path d="M584.3,857.5 l9.5,9.5 M593.8,857.5 l-9.5,9.5" stroke="#353535" stroke-width="1.7" stroke-linecap="round"/><path d="M763,857.5 l9.5,9.5 M772.5,857.5 l-9.5,9.5" stroke="#353535" stroke-width="1.7" stroke-linecap="round"/><path d="M1788.5,931.5 l4,-4 l4,4 M1788.5,1005.5 l4,4 l4,-4" fill="none" stroke="#fcfcfc" stroke-width="1.7" stroke-linecap="round" stroke-linejoin="round"/><rect x="1789" y="993.3" width="7" height="4.3" fill="#8c8c8c"/><rect x="1602" y="1029" width="12.5" height="12" rx="2" fill="none" stroke="#2a2a2a" stroke-width="1.6"/><path d="M1602,1037 h12.5 M1608.3,1037 v4" stroke="#2a2a2a" stroke-width="1.4"/></g>
</svg>
</body></html>
